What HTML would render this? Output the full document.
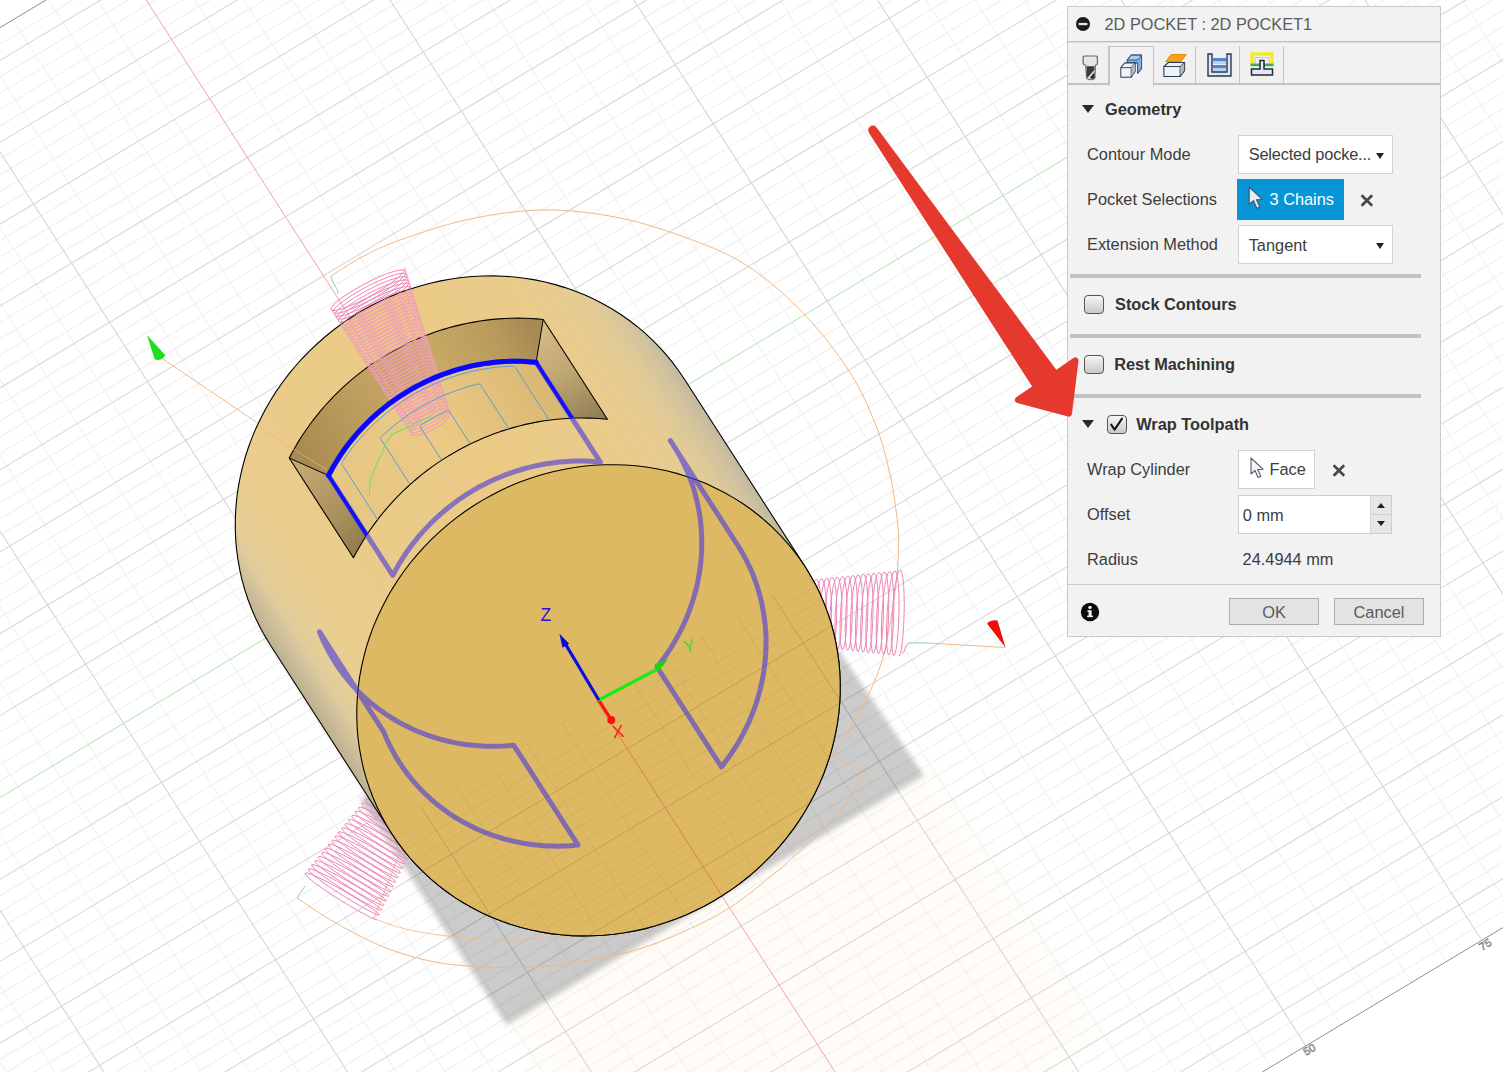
<!DOCTYPE html>
<html><head><meta charset="utf-8"><title>2D Pocket - Wrap Toolpath</title>
<style>
html,body{margin:0;padding:0;background:#fff;}
body{width:1503px;height:1072px;position:relative;overflow:hidden;}
#scene,#overlay{position:absolute;left:0;top:0;display:block}
#overlay{pointer-events:none}

#panel{position:absolute;left:0;top:0;width:0;height:0;font-family:"Liberation Sans",sans-serif;font-size:16.35px;color:#3c3c3c;}
#panel .abs{position:absolute;box-sizing:border-box}
#panel .box{position:absolute;left:1067px;top:6px;width:374px;height:631px;box-sizing:border-box;background:#f2f2f2;border:1px solid #c9c9c9}
#panel .t{position:absolute;white-space:nowrap;line-height:19px;color:#3c3c3c}
#panel .title{color:#5b5b5b}
#panel .hd{font-weight:bold;color:#333}
#panel .tab{border-right:1px solid #c6c6c6;background:#f0f0f0}
#panel .tabA{background:#f2f2f2;border:1px solid #c6c6c6;border-bottom:none}
#panel .tri{width:0;height:0;border-left:6.5px solid transparent;border-right:6.5px solid transparent;border-top:8.8px solid #2b2b2b}
#panel .dd{background:#fff;border:1px solid #d2d2d2}
#panel .caret{position:absolute;right:7.2px;top:16.6px;width:0;height:0;border-left:4.1px solid transparent;border-right:4.1px solid transparent;border-top:6px solid #222}
#panel .sel{background:#0696d7}
#panel .cb{width:19.5px;height:19px;border:1.5px solid #555;border-radius:4px;background:linear-gradient(#f6f6f6,#c9c9c9)}
#panel .spin{position:absolute;right:0;top:0;width:20px;height:100%;background:#e6e6e6;border-left:1px solid #d5d5d5}
#panel .spin:after{content:"";position:absolute;left:0;top:17.5px;width:20px;height:1px;background:#cfcfcf}
#panel .up{position:absolute;left:6px;top:7px;width:0;height:0;border-left:4px solid transparent;border-right:4px solid transparent;border-bottom:5px solid #222}
#panel .dn{position:absolute;left:6px;top:25px;width:0;height:0;border-left:4px solid transparent;border-right:4px solid transparent;border-top:5px solid #222}
#panel .btn{border:1px solid #adadad;background:#e3e3e3}

</style></head><body>
<svg id="scene" width="1503" height="1072" viewBox="0 0 1503 1072">
<defs>
<linearGradient id="gbody" gradientUnits="userSpaceOnUse" x1="270" y1="644.5" x2="684" y2="378.5"><stop offset="0" stop-color="#bdb08f"/><stop offset="0.03" stop-color="#cfc09b"/><stop offset="0.055" stop-color="#dfcb9c"/><stop offset="0.085" stop-color="#e7ce96"/><stop offset="0.14" stop-color="#eacd8e"/><stop offset="0.3" stop-color="#eacb88"/><stop offset="0.6" stop-color="#ebca86"/><stop offset="0.8" stop-color="#eacb8a"/><stop offset="0.9" stop-color="#e6cc92"/><stop offset="0.94" stop-color="#ddc998"/><stop offset="0.975" stop-color="#d0c29e"/><stop offset="1" stop-color="#c2b99e"/></linearGradient>
<linearGradient id="gback" gradientUnits="userSpaceOnUse" x1="308.9" y1="466.8" x2="539.6" y2="340.9"><stop offset="0" stop-color="#a98b52"/><stop offset="0.3" stop-color="#bf9f5f"/><stop offset="0.6" stop-color="#c9aa66"/><stop offset="0.85" stop-color="#b99b5c"/><stop offset="1" stop-color="#a68a54"/></linearGradient>
<linearGradient id="gleft" gradientUnits="userSpaceOnUse" x1="289.2" y1="458" x2="392.8" y2="575.4"><stop offset="0" stop-color="#c9ad74"/><stop offset="0.5" stop-color="#a88f5c"/><stop offset="1" stop-color="#776440"/></linearGradient>
<linearGradient id="gright" gradientUnits="userSpaceOnUse" x1="543.2" y1="319.5" x2="607.4" y2="419.3"><stop offset="0" stop-color="#d9bf85"/><stop offset="0.5" stop-color="#bda572"/><stop offset="1" stop-color="#8d7a52"/></linearGradient>
<linearGradient id="gfloor" gradientUnits="userSpaceOnUse" x1="328.5" y1="475.5" x2="536.1" y2="362.3"><stop offset="0" stop-color="#e6c684"/><stop offset="0.5" stop-color="#ecca86"/><stop offset="1" stop-color="#d8b873"/></linearGradient>
<radialGradient id="warm"><stop offset="0" stop-color="#fff3dc" stop-opacity="0.75"/><stop offset="0.6" stop-color="#fff6e6" stop-opacity="0.45"/><stop offset="1" stop-color="#fff8ee" stop-opacity="0"/></radialGradient>
<filter id="blur2" x="-20%" y="-20%" width="140%" height="140%"><feGaussianBlur stdDeviation="14"/></filter>
<filter id="blur" x="-10%" y="-10%" width="120%" height="120%"><feGaussianBlur stdDeviation="2.6"/></filter>
<clipPath id="capclip"><path d="M805.5,567.3L810.7,575.9 815.6,584.8 820,593.8 824,603.1 827.6,612.6 830.8,622.2 833.5,632 835.7,641.9 837.5,651.9 838.9,662 839.8,672.2 840.2,682.4 840.2,692.7 839.7,702.9 838.8,713.2 837.4,723.5 835.5,733.7 833.2,743.8 830.5,753.9 827.3,763.8 823.7,773.7 819.6,783.4 815.1,792.9 810.2,802.3 804.9,811.5 799.3,820.4 793.2,829.1 786.8,837.6 780,845.8 772.8,853.8 765.3,861.4 757.5,868.8 749.5,875.8 741.1,882.5 732.4,888.9 723.5,894.8 714.4,900.5 705,905.7 695.4,910.5 685.7,915 675.8,919 665.7,922.6 655.5,925.8 645.2,928.6 634.8,930.9 624.3,932.8 613.8,934.3 603.3,935.3 592.7,935.8 582.2,935.9 571.7,935.6 561.2,934.8 550.8,933.6 540.6,931.9 530.4,929.8 520.3,927.2 510.4,924.2 500.7,920.8 491.1,917 481.8,912.7 472.7,908.1 463.8,903 455.1,897.6 446.8,891.8 438.7,885.6 431,879.1 423.5,872.2 416.4,865 409.6,857.5 403.2,849.7 397.2,841.6 391.5,833.3 386.3,824.7 381.4,815.8 377,806.8 373,797.5 369.4,788 366.2,778.4 363.5,768.6 361.3,758.7 359.5,748.7 358.1,738.6 357.2,728.4 356.8,718.2 356.8,707.9 357.3,697.7 358.2,687.4 359.6,677.1 361.5,666.9 363.8,656.8 366.5,646.7 369.7,636.8 373.3,626.9 377.4,617.2 381.9,607.7 386.8,598.3 392.1,589.1 397.7,580.2 403.8,571.5 410.2,563 417,554.8 424.2,546.8 431.7,539.2 439.5,531.8 447.5,524.8 455.9,518.1 464.6,511.7 473.5,505.8 482.6,500.1 492,494.9 501.6,490.1 511.3,485.6 521.2,481.6 531.3,478 541.5,474.8 551.8,472 562.2,469.7 572.7,467.8 583.2,466.3 593.7,465.3 604.3,464.8 614.8,464.7 625.3,465 635.8,465.8 646.2,467 656.4,468.7 666.6,470.8 676.7,473.4 686.6,476.4 696.3,479.8 705.9,483.6 715.2,487.9 724.3,492.5 733.2,497.6 741.9,503 750.2,508.8 758.3,515 766,521.5 773.5,528.4 780.6,535.6 787.4,543.1 793.8,550.9 799.8,559 805.5,567.3Z"/></clipPath>
<clipPath id="bodyclip"><path d="M684,378.5L678.3,370.2 672.3,362.1 665.9,354.3 659.1,346.8 652,339.6 644.5,332.7 636.8,326.2 628.7,320 620.4,314.2 611.7,308.8 602.8,303.7 593.7,299.1 584.4,294.8 574.8,291 565.1,287.6 555.2,284.6 545.1,282 534.9,279.9 524.7,278.2 514.3,277 503.8,276.2 493.3,275.9 482.8,276 472.2,276.5 461.7,277.5 451.2,279 440.7,280.9 430.3,283.2 420,286 409.8,289.2 399.7,292.8 389.8,296.8 380.1,301.3 370.5,306.1 361.1,311.3 352,317 343.1,322.9 334.4,329.3 326,336 318,343 310.2,350.4 302.7,358 295.5,366 288.7,374.2 282.3,382.7 276.2,391.4 270.6,400.3 265.3,409.5 260.4,418.9 255.9,428.4 251.8,438.1 248.2,448 245,457.9 242.3,468 240,478.1 238.1,488.3 236.7,498.6 235.8,508.9 235.3,519.1 235.3,529.4 235.7,539.6 236.6,549.8 238,559.9 239.8,569.9 242,579.8 244.7,589.6 247.9,599.2 251.5,608.7 255.5,618 259.9,627 264.8,635.9 270,644.5 391.5,833.3 397.2,841.6 403.2,849.7 409.6,857.5 416.4,865 423.5,872.2 431,879.1 438.7,885.6 446.8,891.8 455.1,897.6 463.8,903 472.7,908.1 481.8,912.7 491.1,917 500.7,920.8 510.4,924.2 520.3,927.2 530.4,929.8 540.6,931.9 550.8,933.6 561.2,934.8 571.7,935.6 582.2,935.9 592.7,935.8 603.3,935.3 613.8,934.3 624.3,932.8 634.8,930.9 645.2,928.6 655.5,925.8 665.7,922.6 675.8,919 685.7,915 695.4,910.5 705,905.7 714.4,900.5 723.5,894.8 732.4,888.9 741.1,882.5 749.5,875.8 757.5,868.8 765.3,861.4 772.8,853.8 780,845.8 786.8,837.6 793.2,829.1 799.3,820.4 804.9,811.5 810.2,802.3 815.1,792.9 819.6,783.4 823.7,773.7 827.3,763.8 830.5,753.9 833.2,743.8 835.5,733.7 837.4,723.5 838.8,713.2 839.7,702.9 840.2,692.7 840.2,682.4 839.8,672.2 838.9,662 837.5,651.9 835.7,641.9 833.5,632 830.8,622.2 827.6,612.6 824,603.1 820,593.8 815.6,584.8 810.7,575.9 805.5,567.3Z"/></clipPath>
</defs>
<rect width="1503" height="1072" fill="#fff"/>
<path d="M500,1010L930,760L1110,1040L680,1290Z" fill="#ffeccc" fill-opacity="0.14" filter="url(#blur2)"/>
<clipPath id="gclip"><path d="M0,27.6 L1503,-874.2 L1503,927.6 L0,1829.4 Z"/></clipPath>
<g clip-path="url(#gclip)" fill="none" stroke-width="1">
<path id="gsmin" d="M-682.5,0L6.4,1072M-633.8,0L55.1,1072M-536.2,0L152.6,1072M-487.5,0L201.4,1072M-438.8,0L250.1,1072M-390,0L298.9,1072M-292.5,0L396.4,1072M-243.8,0L445.1,1072M-195,0L493.9,1072M-146.2,0L542.6,1072M-48.8,0L640.1,1072M0,0L688.9,1072M48.8,0L737.6,1072M97.5,0L786.4,1072M195,0L883.9,1072M243.8,0L932.6,1072M292.5,0L981.4,1072M341.2,0L1030.1,1072M438.8,0L1127.6,1072M487.5,0L1176.4,1072M536.2,0L1225.1,1072M585,0L1273.9,1072M682.5,0L1371.4,1072M731.2,0L1420.1,1072M780,0L1468.9,1072M828.8,0L1517.6,1072M926.2,0L1615.1,1072M975,0L1663.9,1072M1023.8,0L1712.6,1072M1072.5,0L1761.4,1072M1170,0L1858.9,1072M1218.8,0L1907.6,1072M1267.5,0L1956.4,1072M1316.2,0L2005.1,1072M1413.8,0L2102.6,1072M1462.5,0L2151.4,1072" stroke="#f4f4f4" stroke-width="1.4"/>
<path id="ghmin" d="M0,44L1503,-857.8M0,76.8L1503,-825M0,93.2L1503,-808.6M0,109.5L1503,-792.3M0,125.9L1503,-775.9M0,158.7L1503,-743.1M0,175.1L1503,-726.7M0,191.4L1503,-710.4M0,207.8L1503,-694M0,240.6L1503,-661.2M0,257L1503,-644.8M0,273.3L1503,-628.5M0,289.7L1503,-612.1M0,322.5L1503,-579.3M0,338.9L1503,-562.9M0,355.2L1503,-546.6M0,371.6L1503,-530.2M0,404.4L1503,-497.4M0,420.8L1503,-481M0,437.1L1503,-464.7M0,453.5L1503,-448.3M0,486.3L1503,-415.5M0,502.7L1503,-399.1M0,519L1503,-382.8M0,535.4L1503,-366.4M0,568.2L1503,-333.6M0,584.6L1503,-317.2M0,600.9L1503,-300.9M0,617.3L1503,-284.5M0,650.1L1503,-251.7M0,666.5L1503,-235.3M0,682.8L1503,-219M0,699.2L1503,-202.6M0,732L1503,-169.8M0,748.4L1503,-153.4M0,764.7L1503,-137.1M0,781.1L1503,-120.7M0,813.9L1503,-87.9M0,830.3L1503,-71.5M0,846.6L1503,-55.2M0,863L1503,-38.8M0,895.8L1503,-6M0,912.2L1503,10.4M0,928.5L1503,26.7M0,944.9L1503,43.1M0,977.7L1503,75.9M0,994.1L1503,92.3M0,1010.4L1503,108.6M0,1026.8L1503,125M0,1059.6L1503,157.8M0,1076L1503,174.2M0,1092.3L1503,190.5M0,1108.7L1503,206.9M0,1141.5L1503,239.7M0,1157.9L1503,256.1M0,1174.2L1503,272.4M0,1190.6L1503,288.8M0,1223.4L1503,321.6M0,1239.8L1503,338M0,1256.1L1503,354.3M0,1272.5L1503,370.7M0,1305.3L1503,403.5M0,1321.7L1503,419.9M0,1338L1503,436.2M0,1354.4L1503,452.6M0,1387.2L1503,485.4M0,1403.6L1503,501.8M0,1419.9L1503,518.1M0,1436.3L1503,534.5M0,1469.1L1503,567.3M0,1485.5L1503,583.7M0,1501.8L1503,600M0,1518.2L1503,616.4M0,1551L1503,649.2M0,1567.4L1503,665.6M0,1583.7L1503,681.9M0,1600.1L1503,698.3M0,1632.9L1503,731.1M0,1649.3L1503,747.5M0,1665.6L1503,763.8M0,1682L1503,780.2M0,1714.8L1503,813M0,1731.2L1503,829.4M0,1747.5L1503,845.7M0,1763.9L1503,862.1M0,1796.7L1503,894.9M0,1813.1L1503,911.3" stroke="#f2f2f2" stroke-width="1.4"/>
<path id="gsmaj" d="M-585,0L103.9,1072M-341.2,0L347.6,1072M-97.5,0L591.4,1072M390,0L1078.9,1072M633.8,0L1322.6,1072M877.5,0L1566.4,1072M1121.2,0L1810.1,1072M1365,0L2053.9,1072" stroke="#d6d6d6" stroke-width="1.1"/>
<path id="ghmaj" d="M0,60.4L1503,-841.4M0,142.3L1503,-759.5M0,224.2L1503,-677.6M0,306.1L1503,-595.7M0,388L1503,-513.8M0,469.9L1503,-431.9M0,551.8L1503,-350M0,633.7L1503,-268.1M0,715.6L1503,-186.2M0,879.4L1503,-22.4M0,961.3L1503,59.5M0,1043.2L1503,141.4M0,1125.1L1503,223.3M0,1207L1503,305.2M0,1288.9L1503,387.1M0,1370.8L1503,469M0,1452.7L1503,550.9M0,1534.6L1503,632.8M0,1616.5L1503,714.7M0,1698.4L1503,796.6M0,1780.3L1503,878.5" stroke="#d8d8d8" stroke-width="1.1"/>
<path d="M146.25,0L835.1,1072" stroke="#f0a3a3"/>
<path d="M0,797.5L1503,-104.3" stroke="#a9e6a9"/>
</g>
<path d="M0,1829.4L1503,927.6" stroke="#8f8f8f" stroke-width="1" fill="none"/>
<path d="M0,27.6L1503,-874.2" stroke="#8f8f8f" stroke-width="1" fill="none"/>
<path d="M360,799L779.4,563.3 924,775.5 506.5,1025Z" fill="#000" fill-opacity="0.205" filter="url(#blur)"/>
<g font-family="Liberation Sans,sans-serif" font-size="11" fill="none" stroke="#8a8a8a" stroke-width="0.7"><text transform="translate(1306,1056) rotate(-31)">50</text><text transform="translate(1482,951) rotate(-31)">75</text></g>
<g fill="none" stroke-width="1">
<path d="M330.6,276.2L333,274.7 336.1,272.7 339.8,270.3 343.9,267.7 348.4,264.9 353,262.1 357.5,259.4 362,257 366.2,254.8 370.3,252.7 374.4,250.6 378.6,248.6 383.1,246.6 388.1,244.5 393.7,242.3 400,240 407.2,237.5 415.1,234.8 423.7,231.9 432.7,229 442,226.2 451.4,223.5 460.8,221.1 470,219 479.1,217.2 488.4,215.5 497.8,214 507.2,212.7 516.7,211.6 526.1,210.8 535.6,210.2 545,210 554.4,210.1 563.8,210.5 573.2,211.1 582.7,212.1 592.1,213.2 601.4,214.6 610.7,216.2 620,218 629.3,220 638.7,222.4 648,225 657.3,227.8 666.5,230.7 675.5,233.8 684.2,236.9 692.5,240 700.4,243 708,246 715.3,249 722.3,252.2 729.3,255.5 736.2,259.1 743,263.1 750,267.5 757.1,272.4 764.2,277.7 771.2,283.4 778.3,289.4 785.2,295.6 792,302 798.6,308.4 805,315 811.2,321.7 817.4,328.8 823.5,336 829.3,343.4 835,350.9 840.3,358.2 845.4,365.5 850,372.5 854.2,379.4 858.1,386.2 861.6,392.9 864.9,399.5 867.9,406.1 870.6,412.5 873.3,418.8 875.8,425 878,431 880.1,436.9 881.9,442.6 883.5,448.3 885,453.8 886.4,459.3 887.7,464.7 889,470 890.2,475.3 891.3,480.6 892.3,485.8 893.2,490.9 894,496 894.7,500.8 895.4,505.5 896,510 896.6,514.2 897.1,518.2 897.5,522 897.9,525.6 898.2,529.2 898.4,532.7 898.6,536.3 898.7,540 898.7,544 898.6,548.2 898.5,552.6 898.3,556.9 898,560.9 897.8,564.6 897.6,567.7 897.5,570" stroke="#f3b885"/>
<path d="M897.5,570L897.3,572.3 896.9,575.5 896.6,579.3 896.1,583.5 895.6,588 895,592.5 894.4,597.1 893.7,601.9 892.9,607 892.1,612.3 891.1,617.9 890,623.8 888.8,630 887.5,636.7 886.1,643.6 884.6,650.6 882.9,657.4 881,664 878.8,670.3 876.4,676.6 873.9,682.8 871.2,688.8 868.6,694.5 866,700 863.5,705.1 861.1,710 858.7,714.6 856.3,719 853.7,723.5 851,728 847.9,732.9 844.4,738.1 840.8,743.2 837.4,748 834.6,752.1 832.5,755" stroke="#f3b885"/>
<path d="M832.5,755L866.2,772.5 866.2,772.5 865.2,774.3 863.7,776.6 862,779.4 860,782.6 858,785.8 855.9,789.1 853.9,792.2 852,795 850.3,797.5 848.7,799.8 847.2,802 845.6,804.2 843.9,806.4 842,808.7 839.9,811.2 837.5,814 834.8,817 831.8,820.2 828.6,823.6 825.2,827.1 821.6,830.7 817.9,834.4 814,838.2 810,842 805.8,845.9 801.4,849.9 796.9,854 792.2,858.2 787.4,862.4 782.5,866.7 777.5,870.9 772.5,875 767.4,879.1 762.3,883.4 757,887.6 751.7,891.8 746.3,896 740.9,900 735.5,903.9 730,907.5 724.5,910.9 719,914.1 713.5,917.2 707.9,920.1 702.3,922.9 696.6,925.7 690.8,928.3 685,931 679.1,933.6 673.1,936.3 667,938.8 660.9,941.3 654.7,943.7 648.5,945.9 642.2,948 636,950 629.7,951.8 623.4,953.4 617,954.9 610.6,956.3 604.1,957.6 597.7,958.8 591.3,959.9 585,961 578.7,962 572.4,963 566.2,963.9 559.9,964.7 553.7,965.4 547.5,966 541.2,966.6 535,967 528.8,967.3 522.5,967.5 516.2,967.7 510,967.7 503.8,967.6 497.5,967.5 491.2,967.3 485,967 478.8,966.7 472.5,966.3 466.2,965.9 460,965.4 453.8,964.8 447.5,964 441.2,963.1 435,962 428.8,960.7 422.5,959.3 416.2,957.7 410,956 403.8,954.1 397.5,952.1 391.2,949.9 385,947.5 378.7,944.9 372.2,942 365.7,938.9 359.2,935.6 352.9,932.3 346.7,929 340.7,925.7 335,922.5 329.4,919.2 323.8,915.8 318.2,912.2 312.9,908.7 307.9,905.4 303.5,902.4 299.8,899.9 297,898" stroke="#f3b885"/>
<path d="M400,852L373.8,918.8 373.8,918.8 376.5,919.6 379.9,920.9 384.1,922.3 388.8,923.9 393.8,925.6 399.1,927.2 404.6,928.7 410,930 415.6,931.2 421.5,932.3 427.7,933.3 434.1,934.3 440.6,935.2 447.2,936.1 453.7,936.8 460,937.5 466.4,938.1 473,938.6 479.7,939 486.4,939.3 492.9,939.6 499.1,939.8 504.8,939.9 510,940 514.3,940.1 517.6,940.1 520.4,940 523,939.9 525.6,939.8 528.7,939.5 532.5,939 537.5,938.5 543.4,938 549.8,937.6 556.7,937.2 564.2,936.7 572.3,935.8 580.9,934.5 590.2,932.6 600,930 610.8,926.7 622.8,922.9 635.6,918.6 648.9,913.8 662.3,908.6 675.5,902.8 688.2,896.7 700,890 711.1,882.7 722.1,874.5 732.7,865.7 743,856.6 752.9,847.2 762.4,837.9 771.5,828.7 780,820 788.2,811.2 796.3,801.9 804,792.4 811.2,783.1 817.9,774.4 823.7,766.6 828.6,760 832.5,755" stroke="#f3b885" opacity="0.8"/>
<path d="M160,357L327,470" stroke="#f3b885"/>
<path d="M902,654 C905,652 905,645 908.75,642.8" stroke="#ee86b6"/><path d="M908.75,642.8L927.5,643" stroke="#7fd9a0"/><path d="M927.5,643L1005.4,647.5" stroke="#f3b885"/>
<path d="M898.5,655.6L899.4,656 900.4,653.8 901.4,649.3 902.3,642.6 903.1,634.3 903.7,624.7 904.1,614.4 904.3,604.1 904.1,594.3 903.7,585.6 903,578.5 902,573.4 900.9,570.6 899.6,570.3 898.2,572.5 896.8,577 895.5,583.6 894.3,591.9 893.3,601.4 892.5,611.6 892,621.8 891.7,631.6 891.7,640.2 892.1,647.3 892.6,652.3 893.4,655.1 894.3,655.4 895.2,653.3 896.2,648.8 897.1,642.2 897.9,634 898.5,624.5 898.9,614.4 899.1,604.2 898.9,594.6 898.5,586 897.7,579 896.8,574 895.6,571.2 894.4,570.9 893,573 891.6,577.5 890.3,584 889.1,592.2 888.1,601.5 887.3,611.6 886.8,621.7 886.5,631.3 886.6,639.8 886.9,646.8 887.5,651.8 888.2,654.5 889.1,654.8 890.1,652.7 891,648.3 892,641.8 892.8,633.7 893.4,624.4 893.7,614.4 893.9,604.4 893.7,594.8 893.2,586.4 892.5,579.5 891.6,574.5 890.4,571.8 889.1,571.5 887.8,573.6 886.4,577.9 885.1,584.4 883.9,592.4 882.9,601.7 882.1,611.6 881.6,621.6 881.4,631 881.4,639.4 881.8,646.3 882.3,651.2 883.1,653.9 884,654.3 884.9,652.2 885.9,647.8 886.8,641.5 887.6,633.4 888.2,624.3 888.6,614.4 888.7,604.5 888.5,595.1 888,586.7 887.3,579.9 886.3,575 885.2,572.4 883.9,572 882.5,574.1 881.2,578.4 879.9,584.7 878.7,592.7 877.7,601.8 876.9,611.6 876.4,621.4 876.2,630.8 876.3,639.1 876.6,645.8 877.2,650.7 877.9,653.4 878.8,653.7 879.8,651.6 880.7,647.4 881.6,641.1 882.4,633.2 883,624.1 883.4,614.4 883.5,604.6 883.3,595.4 882.8,587.1 882.1,580.4 881.1,575.6 880,572.9 878.7,572.6 877.3,574.6 875.9,578.9 874.6,585.1 873.5,593 872.5,602 871.7,611.6 871.2,621.3 871,630.5 871.1,638.7 871.4,645.4 872,650.2 872.8,652.8 873.7,653.1 874.6,651.1 875.6,646.9 876.5,640.7 877.2,632.9 877.8,624 878.2,614.4 878.3,604.8 878.1,595.6 877.6,587.5 876.9,580.9 875.9,576.1 874.7,573.5 873.4,573.2 872.1,575.2 870.7,579.4 869.4,585.5 868.3,593.2 867.3,602.1 866.5,611.6 866.1,621.1 865.9,630.2 865.9,638.3 866.3,644.9 866.9,649.6 867.6,652.2 868.5,652.5 869.5,650.6 870.4,646.4 871.3,640.3 872.1,632.7 872.6,623.8 873,614.4 873.1,604.9 872.9,595.9 872.4,587.9 871.6,581.3 870.7,576.6 869.5,574.1 868.2,573.7 866.9,575.7 865.5,579.8 864.2,585.9 863.1,593.5 862.1,602.2 861.4,611.6 860.9,621 860.7,630 860.8,637.9 861.1,644.4 861.7,649.1 862.5,651.7 863.4,652 864.3,650 865.3,645.9 866.2,639.9 866.9,632.4 867.5,623.7 867.8,614.4 867.9,605.1 867.6,596.2 867.2,588.3 866.4,581.8 865.4,577.2 864.3,574.6 863,574.3 861.6,576.2 860.3,580.3 859,586.2 857.9,593.7 856.9,602.3 856.2,611.6 855.7,620.9 855.5,629.7 855.6,637.5 856,643.9 856.6,648.5 857.3,651.1 858.2,651.4 859.2,649.5 860.1,645.5 861,639.6 861.7,632.1 862.3,623.6 862.6,614.4 862.7,605.2 862.4,596.5 861.9,588.7 861.2,582.3 860.2,577.7 859,575.2 857.7,574.9 856.4,576.8 855.1,580.8 853.8,586.6 852.6,594 851.7,602.5 851,611.6 850.5,620.7 850.4,629.4 850.5,637.1 850.8,643.5 851.4,648 852.2,650.5 853.1,650.8 854,649 855,645 855.8,639.2 856.6,631.9 857.1,623.5 857.4,614.4 857.5,605.4 857.2,596.7 856.7,589.1 856,582.8 855,578.3 853.8,575.8 852.5,575.4 851.2,577.3 849.8,581.2 848.6,587 847.4,594.3 846.5,602.6 845.8,611.5 845.4,620.6 845.2,629.1 845.3,636.8 845.7,643 846.3,647.5 847,649.9 847.9,650.3 848.9,648.4 849.8,644.5 850.7,638.8 851.4,631.6 851.9,623.3 852.2,614.5 852.3,605.5 852,597 851.5,589.4 850.7,583.3 849.7,578.8 848.6,576.3 847.3,576 845.9,577.8 844.6,581.7 843.4,587.4 842.2,594.5 841.3,602.7 840.6,611.5 840.2,620.4 840,628.9 840.1,636.4 840.5,642.5 841.1,646.9 841.9,649.4 842.8,649.7 843.7,647.9 844.7,644.1 845.5,638.5 846.2,631.4 846.7,623.2 847,614.5 847.1,605.7 846.8,597.3 846.3,589.8 845.5,583.7 844.5,579.3 843.3,576.9 842.1,576.6 840.7,578.4 839.4,582.1 838.1,587.7 837,594.8 836.1,602.8 835.4,611.5 835,620.3 834.9,628.6 835,636 835.4,642 836,646.4 836.7,648.8 837.6,649.1 838.6,647.4 839.5,643.6 840.3,638.1 841.1,631.1 841.6,623.1 841.8,614.5 841.9,605.8 841.6,597.6 841.1,590.2 840.3,584.2 839.3,579.9 838.1,577.5 836.8,577.1 835.5,578.9 834.2,582.6 832.9,588.1 831.8,595 830.9,603 830.2,611.5 829.8,620.1 829.7,628.3 829.8,635.6 830.2,641.5 830.8,645.8 831.6,648.2 832.5,648.6 833.4,646.8 834.3,643.2 835.2,637.7 835.9,630.9 836.4,623 836.7,614.5 836.7,606 836.4,597.9 835.9,590.6 835.1,584.7 834.1,580.4 832.9,578.1 831.6,577.7 830.3,579.4 828.9,583.1 827.7,588.5 826.6,595.3 825.7,603.1 825.1,611.5 824.7,619.9 824.5,628 824.7,635.2 825.1,641.1 825.7,645.3 826.4,647.7 827.3,648 828.3,646.3 829.2,642.7 830,637.4 830.7,630.6 831.2,622.9 831.5,614.5 831.5,606.1 831.2,598.1 830.6,591 829.8,585.2 828.8,581 827.7,578.6 826.4,578.3 825,579.9 823.7,583.5 822.5,588.8 821.4,595.5 820.5,603.2 819.9,611.5 819.5,619.8 819.4,627.7 819.5,634.8 819.9,640.6 820.5,644.8 821.3,647.1 822.2,647.4 823.1,645.8 824,642.2 824.9,637 825.5,630.4 826,622.7 826.3,614.6 826.3,606.3 826,598.4 825.4,591.4 824.6,585.7 823.6,581.5 822.4,579.2 821.1,578.8 819.8,580.5 818.5,584 817.3,589.2 816.2,595.8 815.3,603.3 814.7,611.4 814.3,619.6 814.2,627.4 814.4,634.4 814.8,640.1 815.4,644.2 816.2,646.5 817,646.9 818,645.3 818.9,641.8 819.7,636.6 820.4,630.1 820.8,622.6 821.1,614.6 821.1,606.5 820.8,598.7 820.2,591.8 819.4,586.2 818.4,582.1 817.2,579.8 815.9,579.4 814.6,581 813.3,584.4 812.1,589.5 811,596 810.1,603.4 809.5,611.4 809.1,619.5 809,627.1 809.2,634 809.6,639.6 810.2,643.7 811,646 811.9,646.3 812.8,644.7 813.7,641.3 814.5,636.3 815.2,629.9 815.7,622.5 815.9,614.6 815.9,606.6 815.5,599 815,592.2 814.2,586.6 813.1,582.6 812,580.3 810.7,580 809.4,581.5 808.1,584.9 806.8,589.9 805.8,596.2 804.9,603.5 804.3,611.4 803.9,619.3 803.9,626.9 804,633.6 804.5,639.1 805.1,643.1 805.9,645.4 806.7,645.8 807.7,644.2 808.6,640.9 809.4,635.9 810,629.6 810.5,622.4 810.7,614.6 810.7,606.8 810.3,599.3 809.8,592.6 808.9,587.1 807.9,583.1 806.7,580.9 805.4,580.5 804.1,582 802.8,585.3 801.6,590.3 800.6,596.5 799.7,603.6 799.1,611.3 798.8,619.1 798.7,626.6 798.9,633.2 799.3,638.6 799.9,642.6 800.7,644.8 801.6,645.2 802.5,643.7 803.4,640.4 804.2,635.6 804.8,629.4 805.3,622.3 805.5,614.7 805.4,606.9 805.1,599.6 804.5,593 803.7,587.6 802.7,583.7 801.5,581.5 800.2,581.1 798.9,582.6 797.6,585.8 796.4,590.6 795.4,596.7 794.5,603.8 793.9,611.3 793.6,619 793.5,626.3 793.7,632.8 794.1,638.1 794.8,642 795.6,644.2 796.4,644.6 797.4,643.2 798.3,640 799,635.2 799.7,629.2 800.1,622.2 800.3,614.7 800.2,607.1 799.9,599.9 799.3,593.4 798.5,588.1 797.5,584.2 796.3,582 795,581.7 793.7,583.1 792.4,586.3 791.2,591 790.2,596.9 789.3,603.9 788.8,611.3 788.4,618.8 788.4,626 788.6,632.4 789,637.7 789.6,641.5 790.4,643.7 791.3,644.1 792.2,642.7 793.1,639.5 793.9,634.9 794.5,628.9 794.9,622.1 795.1,614.7 795,607.3 794.7,600.2 794.1,593.8 793.3,588.6 792.2,584.8 791,582.6 789.8,582.2 788.4,583.6 787.2,586.7 786,591.3 785,597.2 784.2,604 783.6,611.2 783.2,618.6 783.2,625.7 783.4,632 783.8,637.2 784.5,640.9 785.3,643.1 786.2,643.5 787.1,642.1 787.9,639.1 788.7,634.5 789.3,628.7 789.7,622 789.9,614.8 789.8,607.5 789.5,600.5 788.9,594.2 788,589.1 787,585.3 785.8,583.2 784.5,582.8 783.2,584.1 782,587.1 780.8,591.7 779.8,597.4 779,604.1 778.4,611.2 778.1,618.5 778,625.4 778.2,631.6 778.7,636.7 779.3,640.4 780.1,642.5 781,642.9 781.9,641.6 782.8,638.6 783.5,634.2 784.2,628.5 784.6,621.9 784.7,614.8 784.6,607.6 784.3,600.8 783.7,594.6 782.8,589.6 781.8,585.9 780.6,583.8 779.3,583.3 778,584.6 776.7,587.6 775.6,592 774.6,597.6 773.8,604.2 773.2,611.2 772.9,618.3 772.9,625.1 773.1,631.2 773.5,636.2 774.2,639.8 775,642 775.9,642.4 776.8,641.1 777.6,638.2 778.4,633.8 779,628.2 779.4,621.8 779.5,614.9 779.4,607.8 779.1,601.1 778.4,595 777.6,590.1 776.5,586.4 775.3,584.3 774.1,583.9 772.8,585.2 771.5,588 770.4,592.4 769.4,597.9 768.6,604.2 768,611.1 767.7,618.1 767.7,624.8 767.9,630.7 768.4,635.7 769,639.3 769.8,641.4 770.7,641.8 771.6,640.6 772.5,637.7 773.2,633.5 773.8,628 774.2,621.7 774.3,614.9 774.2,608 773.9,601.4 773.2,595.5 772.4,590.6 771.3,587 770.1,584.9 768.8,584.5 767.5,585.7 766.3,588.5 765.1,592.7 764.2,598.1 763.4,604.3 762.8,611.1 762.5,617.9 762.5,624.5 762.8,630.3 763.2,635.2 763.9,638.8 764.7,640.8 765.6,641.3 766.5,640.1 767.3,637.3 768.1,633.1 768.6,627.8 769,621.6 769.2,614.9 769,608.2 768.6,601.7 768,595.9 767.1,591.1 766.1,587.5 764.9,585.5 763.6,585 762.3,586.2 761.1,588.9 759.9,593 758.9,598.3 758.2,604.4 757.6,611 757.4,617.7 757.4,624.2 757.6,629.9 758.1,634.7 758.7,638.2 759.5,640.2 760.4,640.7 761.3,639.5 762.2,636.9 762.9,632.8 763.5,627.6 763.8,621.5 764,615 763.8,608.4 763.4,602 762.8,596.3 761.9,591.6 760.9,588.1 759.7,586 758.4,585.6 757.1,586.7 755.8,589.4 754.7,593.4 753.7,598.5 753,604.5 752.5,611 752.2,617.6 752.2,623.9 752.5,629.5 752.9,634.2 753.6,637.7 754.4,639.7 755.3,640.1 756.2,639 757,636.4 757.7,632.4 758.3,627.4 758.7,621.4 758.8,615 758.6,608.5 758.2,602.3 757.6,596.7 756.7,592 755.6,588.6 754.4,586.6 753.2,586.1 751.9,587.2 750.6,589.8 749.5,593.7 748.5,598.8 747.8,604.6 747.3,610.9 747,617.4 747,623.5 747.3,629.1 747.8,633.7 748.4,637.1 749.2,639.1 750.1,639.6 751,638.5 751.8,636 752.6,632.1 753.1,627.1 753.5,621.4 753.6,615.1 753.4,608.7 753,602.6 752.3,597.1 751.5,592.5 750.4,589.2 749.2,587.2 747.9,586.7 746.6,587.7 745.4,590.2 744.3,594.1 743.3,599 742.6,604.7 742.1,610.9 741.8,617.2 741.9,623.2 742.1,628.7 742.6,633.2 743.3,636.6 744.1,638.5 745,639 745.9,638 746.7,635.5 747.4,631.8 747.9,626.9 748.3,621.3 748.4,615.1 748.2,608.9 747.8,602.9 747.1,597.5 746.2,593 745.2,589.7 744,587.8 742.7,587.3 741.4,588.3 740.2,590.7 739.1,594.4 738.1,599.2 737.4,604.8 736.9,610.8 736.7,617 736.7,622.9 737,628.3 737.5,632.7 738.1,636 738.9,638 739.8,638.5 740.7,637.5 741.5,635.1 742.2,631.4 742.8,626.7 743.1,621.2 743.2,615.2 743,609.1 742.6,603.2 741.9,598 741,593.5 739.9,590.3 738.7,588.3 737.5,587.8 736.2,588.8 735,591.1 733.9,594.7 732.9,599.4 732.2,604.9 731.7,610.8 731.5,616.8 731.5,622.6 731.8,627.8 732.3,632.2 733,635.4 733.8,637.4 734.7,637.9 735.5,637 736.4,634.7 737.1,631.1 737.6,626.5 737.9,621.1 738,615.3 737.8,609.3 737.4,603.6 736.7,598.4 735.8,594 734.7,590.8 733.5,588.9 732.2,588.4 731,589.3 729.7,591.6 728.7,595.1 727.7,599.6 727,604.9 726.5,610.7 726.3,616.6 726.4,622.3 726.7,627.4 727.2,631.7 727.9,634.9 728.7,636.8 729.5,637.4 730.4,636.5 731.2,634.2 731.9,630.8 732.4,626.3 732.7,621 732.8,615.3 732.6,609.5 732.2,603.9 731.5,598.8 730.6,594.5 729.5,591.4 728.3,589.5 727,588.9 725.7,589.8 724.5,592 723.4,595.4 722.5,599.8 721.8,605 721.4,610.6 721.2,616.4 721.2,622 721.5,627 722,631.2 722.7,634.3 723.5,636.2 724.4,636.8 725.2,636 726.1,633.8 726.7,630.4 727.3,626.1 727.6,621 727.6,615.4 727.4,609.7 727,604.2 726.2,599.2 725.3,595 724.2,591.9 723,590 721.8,589.5 720.5,590.3 719.3,592.4 718.2,595.7 717.3,600 716.6,605.1 716.2,610.6 716,616.2 716,621.7 716.3,626.6 716.9,630.7 717.6,633.8 718.4,635.7 719.2,636.2 720.1,635.5 720.9,633.4 721.6,630.1 722.1,625.9 722.4,620.9 722.4,615.4 722.2,609.9 721.7,604.5 721,599.6 720.1,595.6 719,592.5" stroke="#ee86b6" stroke-width="1"/>
<path d="M376.6,918.9L376.6,919.6 374.6,919.1 370.5,917.3 364.7,914.4 357.5,910.4 349.3,905.6 340.6,900.3 331.9,894.8 323.8,889.3 316.7,884.3 311,879.9 307,876.4 305.1,874.1 305.3,873 307.5,873.1 311.8,874.6 317.8,877.2 325.2,880.8 333.5,885.2 342.4,890.1 351.2,895.3 359.5,900.4 366.8,905.1 372.7,909.1 376.8,912.2 378.9,914.2 379,915 376.9,914.5 372.9,912.7 367.2,909.8 360.1,905.9 352,901.2 343.4,895.9 334.9,890.5 326.9,885.1 319.8,880.1 314.2,875.7 310.3,872.3 308.4,870 308.6,868.9 310.8,869 315.1,870.4 321,873 328.3,876.5 336.5,880.9 345.2,885.8 353.9,890.8 362.1,895.9 369.3,900.5 375.1,904.5 379.2,907.5 381.3,909.5 381.3,910.3 379.3,909.8 375.4,908.1 369.7,905.2 362.7,901.4 354.7,896.7 346.3,891.5 337.8,886.1 329.9,880.8 323,875.9 317.5,871.6 313.6,868.2 311.8,865.9 311.9,864.8 314.2,864.9 318.3,866.3 324.2,868.8 331.3,872.3 339.5,876.6 348.1,881.4 356.7,886.4 364.7,891.3 371.8,895.9 377.6,899.9 381.6,902.9 383.7,904.9 383.7,905.7 381.7,905.2 377.8,903.5 372.2,900.7 365.3,896.8 357.4,892.3 349.1,887.1 340.8,881.8 333,876.6 326.2,871.7 320.7,867.4 316.9,864.1 315.1,861.8 315.3,860.6 317.5,860.8 321.6,862.1 327.3,864.6 334.4,868 342.4,872.3 350.9,877 359.4,881.9 367.4,886.8 374.4,891.4 380,895.2 384,898.2 386,900.2 386.1,901 384.1,900.5 380.2,898.9 374.7,896.1 367.9,892.3 360.2,887.8 352,882.8 343.8,877.5 336.1,872.3 329.4,867.5 324,863.3 320.3,859.9 318.4,857.7 318.6,856.5 320.8,856.6 324.8,858 330.5,860.4 337.5,863.8 345.4,867.9 353.8,872.6 362.1,877.5 370,882.3 376.9,886.8 382.4,890.6 386.3,893.6 388.4,895.5 388.4,896.3 386.5,895.9 382.7,894.3 377.3,891.5 370.5,887.8 362.9,883.3 354.8,878.4 346.7,873.2 339.2,868.1 332.5,863.3 327.2,859.1 323.6,855.8 321.8,853.6 322,852.4 324.1,852.5 328.1,853.8 333.7,856.2 340.6,859.5 348.4,863.6 356.6,868.2 364.9,873 372.6,877.8 379.4,882.2 384.9,886 388.7,889 390.7,890.9 390.8,891.7 388.9,891.2 385.1,889.6 379.8,886.9 373.2,883.3 365.6,878.9 357.7,874 349.7,868.9 342.2,863.8 335.7,859.1 330.5,855 326.9,851.7 325.1,849.4 325.3,848.3 327.4,848.4 331.3,849.6 336.9,852 343.7,855.3 351.3,859.3 359.5,863.8 367.6,868.6 375.2,873.3 381.9,877.6 387.3,881.4 391.1,884.3 393.1,886.2 393.1,887 391.3,886.6 387.6,885 382.3,882.4 375.8,878.8 368.4,874.4 360.5,869.6 352.7,864.6 345.3,859.6 338.9,854.9 333.7,850.8 330.2,847.6 328.5,845.3 328.6,844.2 330.7,844.3 334.6,845.5 340,847.8 346.7,851 354.3,855 362.3,859.4 370.3,864.1 377.8,868.8 384.4,873.1 389.8,876.8 393.5,879.7 395.4,881.5 395.5,882.3 393.6,881.9 390,880.4 384.8,877.8 378.4,874.3 371.1,870 363.4,865.2 355.7,860.2 348.4,855.3 342.1,850.7 337,846.7 333.5,843.5 331.8,841.2 332,840.1 334,840.2 337.8,841.3 343.2,843.6 349.8,846.8 357.3,850.7 365.2,855.1 373,859.7 380.4,864.2 386.9,868.5 392.2,872.1 395.9,875 397.8,876.9 397.8,877.7 396,877.3 392.5,875.8 387.4,873.2 381,869.8 373.8,865.5 366.2,860.9 358.6,855.9 351.5,851.1 345.3,846.5 340.3,842.5 336.8,839.3 335.1,837.1 335.3,836 337.3,836 341.1,837.2 346.4,839.4 352.9,842.5 360.2,846.3 368,850.7 375.7,855.2 383,859.7 389.5,863.9 394.6,867.5 398.3,870.4 400.2,872.2 400.2,873 398.4,872.7 394.9,871.2 389.9,868.7 383.7,865.2 376.6,861.1 369.1,856.5 361.6,851.6 354.6,846.8 348.4,842.3 343.5,838.4 340.1,835.2 338.5,833 338.6,831.9 340.6,831.9 344.3,833 349.5,835.2 355.9,838.2 363.2,842 370.8,846.3 378.5,850.8 385.7,855.2 392,859.3 397.1,862.9 400.6,865.7 402.5,867.6 402.6,868.3 400.8,868 397.4,866.6 392.4,864.1 386.3,860.7 379.3,856.7 372,852.1 364.6,847.3 357.7,842.6 351.6,838.1 346.8,834.2 343.5,831.1 341.8,828.9 342,827.8 343.9,827.8 347.6,828.9 352.7,831 359,834 366.1,837.7 373.7,841.9 381.2,846.3 388.3,850.7 394.5,854.8 399.5,858.3 403,861.1 404.9,862.9 404.9,863.7 403.2,863.4 399.8,862 395,859.5 388.9,856.2 382.1,852.2 374.8,847.7 367.6,843 360.8,838.3 354.8,833.9 350.1,830.1 346.8,827 345.2,824.8 345.3,823.7 347.2,823.7 350.8,824.7 355.9,826.8 362.1,829.7 369.1,833.4 376.5,837.5 383.9,841.8 390.9,846.2 397,850.2 401.9,853.7 405.4,856.4 407.2,858.2 407.3,859 405.6,858.7 402.3,857.3 397.5,855 391.6,851.7 384.8,847.8 377.7,843.3 370.6,838.7 363.9,834.1 358,829.7 353.3,825.9 350.1,822.9 348.5,820.7 348.7,819.6 350.5,819.5 354.1,820.5 359,822.6 365.1,825.5 372,829 379.3,833.1 386.6,837.4 393.5,841.6 399.5,845.6 404.4,849 407.8,851.8 409.6,853.6 409.6,854.4 408,854.1 404.7,852.7 400,850.4 394.2,847.2 387.6,843.3 380.5,839 373.5,834.4 367,829.8 361.2,825.5 356.6,821.8 353.4,818.7 351.8,816.6 352,815.5 353.8,815.4 357.3,816.4 362.2,818.4 368.2,821.2 375,824.7 382.2,828.7 389.3,832.9 396.1,837.1 402,841 406.8,844.4 410.2,847.1 411.9,848.9 412,849.7 410.4,849.4 407.2,848.1 402.6,845.8 396.8,842.7 390.3,838.9 383.4,834.6 376.5,830.1 370.1,825.6 364.4,821.3 359.8,817.6 356.7,814.6 355.2,812.5 355.3,811.4 357.1,811.3 360.6,812.2 365.3,814.2 371.2,816.9 377.9,820.4 385,824.3 392,828.5 398.7,832.6 404.5,836.4 409.2,839.8 412.5,842.5 414.3,844.2 414.4,845 412.8,844.8 409.6,843.5 405.1,841.3 399.5,838.2 393.1,834.4 386.3,830.2 379.5,825.8 373.1,821.3 367.6,817.2 363.1,813.5 360,810.5 358.5,808.4 358.7,807.3 360.5,807.2 363.8,808.1 368.5,809.9 374.3,812.7 380.9,816.1 387.8,819.9 394.7,824 401.3,828.1 407,831.9 411.7,835.2 414.9,837.8 416.6,839.6 416.7,840.4 415.2,840.1 412.1,838.9 407.6,836.7 402.1,833.7 395.8,830 389.2,825.8 382.5,821.5 376.2,817.1 370.8,813 366.4,809.3 363.4,806.4 361.9,804.3 362,803.2 363.8,803 367,803.9 371.7,805.7 377.4,808.4 383.8,811.7 390.6,815.5 397.4,819.5 403.9,823.5 409.5,827.3 414.1,830.6 417.3,833.1 419,834.9 419.1,835.7 417.6,835.5 414.5,834.3 410.2,832.2 404.7,829.2 398.6,825.6 392,821.5 385.5,817.1 379.3,812.8 374,808.8 369.6,805.2 366.7,802.3 365.2,800.2 365.3,799 367.1,798.9 370.3,799.7 374.8,801.5 380.4,804.1 386.7,807.4 393.4,811.1 400.1,815.1 406.5,819 412,822.7 416.5,825.9 419.7,828.5 421.4,830.2 421.5,831 420,830.9 417,829.7 412.7,827.6 407.4,824.7 401.3,821.1 394.9,817.1 388.5,812.8 382.4,808.6 377.2,804.6 372.9,801 370,798.2 368.5,796.1 368.7,794.9 370.4,794.8 373.5,795.6 378,797.3 383.5,799.9 389.7,803.1 396.3,806.7 402.9,810.6 409.1,814.5 414.5,818.1 418.9,821.3 422.1,823.8 423.7,825.6 423.8,826.4 422.4,826.2 419.5,825.1 415.3,823 410,820.2 404.1,816.7 397.8,812.7 391.5,808.5 385.5,804.4 380.4,800.4 376.2,796.9 373.3,794 371.9,792 372,790.8 373.6,790.6 376.7,791.4 381.1,793.1 386.5,795.6 392.6,798.7 399.1,802.3 405.6,806.1 411.6,809.9 417,813.5 421.4,816.7 424.4,819.2 426.1,820.9 426.2,821.7 424.8,821.6 421.9,820.5 417.8,818.5 412.7,815.7 406.9,812.3 400.7,808.4 394.5,804.2 388.7,800.1 383.5,796.2 379.5,792.8 376.6,789.9 375.2,787.9 375.3,786.7 376.9,786.5 380,787.3 384.3,788.9 389.6,791.3 395.6,794.4 401.9,797.9 408.3,801.7 414.2,805.4 419.5,809 423.8,812.1 426.8,814.5 428.4,816.2 428.5,817.1 427.2,816.9 424.4,815.9 420.4,813.9 415.3,811.2 409.6,807.8 403.5,804 397.5,799.9 391.8,795.9 386.7,792 382.7,788.6 379.9,785.8 378.6,783.8 378.7,782.6 380.2,782.4 383.2,783.1 387.4,784.7 392.6,787 398.5,790.1 404.7,793.5 411,797.2 416.8,800.9 422,804.4 426.2,807.4 429.2,809.9 430.8,811.6 430.9,812.4 429.6,812.3 426.8,811.3 422.9,809.4 418,806.7 412.4,803.4 406.4,799.6 400.5,795.6 394.9,791.6 389.9,787.8 386,784.5 383.3,781.7 381.9,779.7 382,778.5 383.5,778.3 386.5,778.9 390.6,780.5 395.7,782.8 401.4,785.7 407.5,789.1 413.6,792.7 419.4,796.3 424.5,799.8 428.6,802.8 431.6,805.2 433.1,806.9 433.3,807.7 432,807.7 429.3,806.7 425.4,804.8 420.6,802.2 415.1,798.9 409.3,795.3 403.5,791.3 398,787.4 393.1,783.7 389.3,780.3 386.6,777.6 385.2,775.6 385.3,774.4 386.8,774.1 389.7,774.8 393.7,776.3 398.7,778.5 404.3,781.4 410.3,784.7 416.3,788.2 422,791.8 427,795.2 431.1,798.2 433.9,800.6 435.5,802.2 435.6,803.1 434.4,803 431.8,802.1 428,800.3 423.3,797.7 417.9,794.5 412.2,790.9 406.5,787 401.1,783.2 396.4,779.5 392.6,776.2 389.9,773.5 388.6,771.5 388.7,770.3 390.1,770 392.9,770.6 396.9,772 401.7,774.2 407.3,777 413.2,780.3 419,783.8 424.6,787.3 429.5,790.6 433.5,793.5 436.3,795.9 437.8,797.6 438,798.4 436.8,798.4 434.2,797.5 430.5,795.7 425.9,793.2 420.7,790.1 415.1,786.5 409.5,782.7 404.2,778.9 399.6,775.3 395.8,772 393.2,769.3 391.9,767.3 392,766.2 393.4,765.9 396.1,766.4 400,767.8 404.8,770 410.2,772.7 416,775.9 421.7,779.3 427.2,782.7 432,786 435.9,788.9 438.7,791.3 440.2,792.9 440.4,793.8 439.2,793.7 436.7,792.9 433.1,791.1 428.6,788.7 423.4,785.7 418,782.2 412.5,778.5 407.3,774.7 402.8,771.1 399.1,767.9 396.6,765.2 395.3,763.2 395.3,762.1 396.7,761.7 399.4,762.3 403.1,763.6 407.8,765.7 413.1,768.4 418.8,771.5 424.4,774.8 429.8,778.2 434.5,781.4 438.3,784.3 441.1,786.6 442.6,788.2 442.7,789.1 441.6,789.1 439.2,788.3 435.7,786.6 431.3,784.2 426.2,781.2 420.9,777.8 415.5,774.2 410.4,770.5 406,766.9 402.4,763.7 399.9,761.1 398.6,759.1 398.6,757.9 400,757.6 402.6,758.1 406.3,759.4 410.9,761.4 416.1,764 421.6,767.1 427.1,770.3 432.3,773.7 437,776.8 440.7,779.7 443.4,782 444.9,783.6 445.1,784.4 444,784.5 441.6,783.7 438.2,782 433.9,779.7 429,776.8 423.8,773.5 418.5,769.9 413.5,766.2 409.2,762.7 405.7,759.6 403.2,757 401.9,755 402,753.8 403.3,753.5 405.8,753.9 409.4,755.2 413.9,757.1 419,759.7 424.4,762.6 429.8,765.9 434.9,769.1 439.5,772.3 443.2,775 445.8,777.3 447.3,778.9 447.5,779.8 446.4,779.8 444.1,779.1 440.8,777.5 436.6,775.2 431.8,772.4 426.6,769.1 421.5,765.6 416.7,762 412.4,758.6 408.9,755.5 406.5,752.9 405.3,750.9 405.3,749.7 406.6,749.3 409,749.7 412.6,750.9 416.9,752.8 421.9,755.3 427.2,758.2 432.5,761.4 437.5,764.6 441.9,767.7 445.6,770.4 448.2,772.6 449.6,774.3 449.8,775.1 448.8,775.2 446.6,774.5 443.3,772.9 439.2,770.7 434.6,767.9 429.5,764.7 424.5,761.3 419.8,757.8 415.6,754.4 412.2,751.3 409.8,748.8 408.6,746.8 408.6,745.6 409.9,745.2 412.3,745.6 415.7,746.7 420,748.6 424.8,751 430,753.8 435.2,756.9 440.1,760.1 444.4,763.1 448,765.8 450.6,768 452,769.6 452.2,770.5 451.2,770.6 449.1,769.9 445.9,768.4 441.9,766.2 437.3,763.5 432.4,760.4 427.5,757 422.9,753.5 418.8,750.2 415.5,747.2 413.2,744.6 412,742.7 412,741.5 413.2,741.1 415.5,741.4 418.8,742.5 423,744.3 427.7,746.6 432.8,749.4 437.8,752.4 442.6,755.5 446.9,758.5 450.4,761.1 452.9,763.3 454.3,764.9 454.6,765.8 453.6,765.9 451.5,765.3 448.5,763.8 444.6,761.8 440.1,759.1 435.3,756 430.6,752.7 426,749.3 422,746 418.8,743 416.5,740.5 415.3,738.6 415.3,737.4 416.4,736.9 418.7,737.2 422,738.3 426,740 430.6,742.3 435.6,745 440.5,748 445.2,751 449.4,753.9 452.8,756.5 455.3,758.7 456.7,760.3 456.9,761.1 456,761.3 454,760.7 451,759.3 447.2,757.3 442.9,754.7 438.2,751.7 433.6,748.4 429.1,745.1 425.2,741.8 422.1,738.9 419.8,736.4 418.6,734.5 418.6,733.3 419.7,732.8 421.9,733.1 425.1,734.1 429,735.7 433.6,737.9 438.4,740.6 443.2,743.5 447.8,746.4 451.9,749.3 455.2,751.9 457.7,754 459.1,755.6 459.3,756.5 458.4,756.7 456.5,756.1 453.6,754.8 449.9,752.8 445.7,750.3 441.1,747.3 436.6,744.1 432.3,740.8 428.4,737.7 425.3,734.8 423.1,732.3" stroke="#ee86b6" stroke-width="1"/>
<path d="M297,898L305,886" stroke="#7fd9a0"/><path d="M404.9,267.6L404.8,269.9 402.6,273.2 398.3,277.4 392.3,282.2 384.8,287.3 376.3,292.6 367.4,297.6 358.5,302.1 350.1,305.8 342.9,308.6 337,310.2 333,310.6 331,309.8 331.2,307.8 333.6,304.7 338,300.8 344.1,296.2 351.6,291.3 360.2,286.4 369.2,281.6 378.1,277.4 386.5,273.9 393.9,271.4 399.8,270.1 403.9,269.9 405.9,271 405.8,273.3 403.6,276.6 399.4,280.7 393.4,285.5 386,290.6 377.6,295.8 368.7,300.8 359.9,305.2 351.7,308.9 344.5,311.6 338.8,313.1 334.8,313.5 332.9,312.6 333.1,310.6 335.5,307.6 339.8,303.7 345.9,299.2 353.4,294.3 361.8,289.4 370.7,284.7 379.6,280.5 387.9,277.1 395.2,274.7 401,273.4 405,273.3 407,274.4 406.9,276.6 404.6,279.9 400.4,284.1 394.5,288.8 387.1,293.9 378.8,299 370.1,303.9 361.4,308.3 353.3,311.9 346.2,314.5 340.5,316.1 336.6,316.4 334.7,315.5 335,313.5 337.3,310.4 341.7,306.5 347.7,302.1 355.1,297.2 363.5,292.4 372.3,287.7 381,283.6 389.2,280.3 396.4,277.9 402.1,276.7 406.1,276.6 408,277.7 407.9,280 405.7,283.3 401.5,287.4 395.6,292.1 388.3,297.2 380.1,302.2 371.5,307.1 362.9,311.4 354.8,314.9 347.8,317.5 342.2,319 338.4,319.3 336.6,318.4 336.9,316.3 339.2,313.3 343.5,309.4 349.5,305 356.8,300.2 365.1,295.4 373.8,290.8 382.5,286.8 390.6,283.5 397.7,281.2 403.3,280 407.2,279.9 409.1,281.1 408.9,283.4 406.7,286.7 402.5,290.8 396.7,295.4 389.5,300.4 381.4,305.5 372.8,310.2 364.3,314.5 356.4,318 349.5,320.5 344,321.9 340.2,322.2 338.4,321.2 338.7,319.2 341.1,316.1 345.4,312.3 351.3,307.9 358.6,303.1 366.7,298.4 375.4,293.9 383.9,289.9 391.9,286.7 398.9,284.4 404.5,283.3 408.3,283.3 410.2,284.5 410,286.8 407.7,290 403.6,294.1 397.8,298.8 390.7,303.7 382.6,308.7 374.2,313.4 365.8,317.6 358,321 351.1,323.5 345.7,324.8 342,325 340.3,324.1 340.6,322 343,319 347.2,315.2 353.1,310.8 360.3,306.1 368.4,301.4 376.9,296.9 385.4,293 393.3,289.9 400.1,287.7 405.6,286.6 409.4,286.6 411.2,287.8 411,290.1 408.8,293.4 404.7,297.5 398.9,302.1 391.9,307 383.9,311.9 375.6,316.5 367.3,320.7 359.5,324 352.8,326.4 347.5,327.8 343.8,327.9 342.2,326.9 342.5,324.9 344.8,321.8 349,318 354.9,313.7 362,309 370,304.4 378.4,300 386.8,296.2 394.6,293.1 401.4,290.9 406.8,289.9 410.5,290 412.3,291.2 412,293.5 409.8,296.8 405.7,300.8 400,305.4 393,310.2 385.2,315.1 376.9,319.7 368.7,323.8 361.1,327 354.5,329.4 349.2,330.7 345.7,330.8 344,329.8 344.4,327.7 346.7,324.7 350.9,320.9 356.7,316.6 363.7,312 371.6,307.4 380,303.1 388.2,299.3 395.9,296.3 402.6,294.2 407.9,293.2 411.6,293.3 413.3,294.6 413.1,296.9 410.8,300.2 406.8,304.2 401.1,308.7 394.2,313.5 386.5,318.3 378.3,322.8 370.2,326.8 362.7,330.1 356.1,332.4 351,333.6 347.5,333.7 345.9,332.7 346.2,330.6 348.6,327.6 352.7,323.8 358.4,319.5 365.4,315 373.3,310.4 381.5,306.2 389.7,302.5 397.3,299.5 403.9,297.5 409.1,296.5 412.7,296.7 414.4,297.9 414.1,300.3 411.9,303.5 407.9,307.5 402.3,312 395.4,316.8 387.7,321.5 379.7,326 371.7,329.9 364.3,333.1 357.8,335.3 352.7,336.5 349.3,336.6 347.7,335.5 348.1,333.4 350.4,330.4 354.5,326.7 360.2,322.4 367.1,317.9 374.9,313.4 383,309.2 391.1,305.6 398.6,302.7 405.1,300.7 410.3,299.8 413.8,300 415.4,301.3 415.1,303.6 412.9,306.9 408.9,310.9 403.4,315.3 396.6,320 389,324.7 381.1,329.1 373.2,333 365.8,336.1 359.5,338.3 354.5,339.4 351.1,339.5 349.6,338.4 350,336.3 352.3,333.3 356.4,329.6 362,325.3 368.9,320.9 376.5,316.5 384.6,312.3 392.5,308.7 399.9,305.9 406.3,304 411.4,303.1 414.9,303.3 416.5,304.7 416.2,307 414,310.3 410,314.2 404.5,318.6 397.8,323.3 390.3,327.9 382.4,332.3 374.7,336.1 367.4,339.1 361.2,341.3 356.2,342.3 352.9,342.3 351.4,341.2 351.9,339.1 354.2,336.1 358.2,332.4 363.8,328.3 370.6,323.9 378.1,319.5 386.1,315.4 393.9,311.9 401.2,309.1 407.6,307.2 412.6,306.4 415.9,306.7 417.5,308 417.2,310.4 415,313.6 411.1,317.5 405.6,321.9 399,326.6 391.6,331.1 383.8,335.4 376.1,339.2 369,342.2 362.8,344.2 358,345.3 354.7,345.2 353.3,344.1 353.7,342 356,339 360,335.3 365.6,331.2 372.3,326.8 379.7,322.5 387.6,318.5 395.3,315 402.5,312.3 408.8,310.5 413.7,309.7 417,310 418.6,311.4 418.2,313.8 416.1,317 412.2,320.9 406.8,325.2 400.2,329.8 392.9,334.3 385.2,338.6 377.6,342.2 370.6,345.2 364.5,347.2 359.7,348.2 356.6,348.1 355.1,347 355.6,344.8 357.9,341.9 361.9,338.2 367.3,334.1 374,329.8 381.4,325.5 389.1,321.6 396.7,318.2 403.9,315.5 410,313.8 414.9,313 418.1,313.4 419.6,314.8 419.3,317.1 417.1,320.4 413.2,324.2 407.9,328.6 401.4,333.1 394.2,337.5 386.6,341.7 379.1,345.3 372.2,348.2 366.2,350.1 361.5,351.1 358.4,351 357,349.8 357.5,347.7 359.7,344.7 363.7,341.1 369.1,337 375.7,332.8 383,328.6 390.6,324.7 398.2,321.3 405.2,318.7 411.2,317 416,316.4 419.2,316.7 420.7,318.1 420.3,320.5 418.2,323.7 414.3,327.6 409.1,331.9 402.7,336.3 395.5,340.7 388,344.8 380.6,348.4 373.8,351.2 367.9,353.1 363.3,354 360.2,353.9 358.9,352.7 359.3,350.5 361.6,347.6 365.5,344 370.9,339.9 377.4,335.7 384.6,331.6 392.1,327.8 399.6,324.5 406.5,321.9 412.4,320.3 417.1,319.7 420.3,320.1 421.7,321.5 421.3,323.9 419.2,327.1 415.4,330.9 410.2,335.2 403.9,339.6 396.8,343.9 389.4,348 382.1,351.5 375.4,354.2 369.6,356.1 365,356.9 362,356.7 360.7,355.5 361.2,353.4 363.5,350.4 367.3,346.9 372.6,342.9 379,338.7 386.2,334.6 393.6,330.9 401,327.6 407.8,325.2 413.7,323.6 418.3,323 421.4,323.4 422.8,324.9 422.4,327.3 420.2,330.4 416.5,334.2 411.3,338.5 405.1,342.8 398.1,347.1 390.8,351.1 383.6,354.5 377,357.2 371.3,359 366.8,359.8 363.8,359.6 362.6,358.4 363.1,356.2 365.3,353.3 369.2,349.7 374.4,345.8 380.7,341.7 387.8,337.7 395.1,333.9 402.4,330.8 409.1,328.4 414.9,326.8 419.4,326.3 422.5,326.8 423.8,328.2 423.4,330.6 421.3,333.8 417.6,337.6 412.5,341.8 406.3,346.1 399.4,350.3 392.2,354.2 385.2,357.6 378.6,360.2 373,362 368.6,362.7 365.7,362.5 364.4,361.2 364.9,359.1 367.2,356.2 371,352.6 376.2,348.7 382.4,344.7 389.4,340.7 396.6,337 403.8,334 410.4,331.6 416.1,330.1 420.6,329.6 423.5,330.1 424.9,331.6 424.5,334 422.4,337.2 418.7,340.9 413.6,345.1 407.5,349.3 400.7,353.5 393.6,357.4 386.7,360.7 380.2,363.2 374.7,364.9 370.3,365.6 367.5,365.4 366.3,364.1 366.8,361.9 369,359 372.8,355.5 377.9,351.7 384.1,347.6 391,343.7 398.1,340.1 405.2,337.1 411.7,334.8 417.3,333.4 421.7,332.9 424.6,333.5 425.9,335 425.5,337.4 423.4,340.5 419.8,344.3 414.8,348.3 408.8,352.6 402.1,356.7 395.1,360.5 388.2,363.7 381.8,366.2 376.4,367.9 372.1,368.5 369.3,368.2 368.1,367 368.7,364.8 370.9,361.9 374.6,358.4 379.7,354.6 385.8,350.6 392.5,346.8 399.6,343.2 406.5,340.3 413,338 418.5,336.7 422.8,336.3 425.7,336.8 427,338.3 426.5,340.7 424.5,343.9 420.9,347.6 415.9,351.6 410,355.8 403.4,359.9 396.5,363.6 389.7,366.8 383.4,369.2 378.1,370.8 373.9,371.5 371.1,371.1 370,369.8 370.5,367.7 372.7,364.8 376.4,361.3 381.4,357.5 387.4,353.6 394.1,349.8 401.1,346.3 407.9,343.4 414.3,341.3 419.7,339.9 424,339.6 426.8,340.2 428,341.7 427.6,344.1 425.5,347.2 422,350.9 417.1,354.9 411.2,359.1 404.7,363.1 397.9,366.7 391.2,369.9 385.1,372.2 379.8,373.8 375.6,374.4 373,374 371.9,372.7 372.4,370.5 374.6,367.6 378.2,364.2 383.2,360.5 389.1,356.6 395.7,352.8 402.6,349.4 409.3,346.6 415.5,344.5 420.9,343.2 425.1,342.9 427.9,343.5 429.1,345.1 428.6,347.5 426.6,350.6 423,354.2 418.3,358.2 412.5,362.3 406,366.3 399.3,369.9 392.7,372.9 386.7,375.2 381.5,376.7 377.4,377.3 374.8,376.9 373.7,375.5 374.3,373.4 376.4,370.5 380,367.1 384.9,363.4 390.8,359.6 397.3,355.9 404.1,352.6 410.7,349.8 416.8,347.7 422.1,346.5 426.2,346.2 428.9,346.9 430.1,348.5 429.7,350.9 427.6,354 424.1,357.6 419.4,361.5 413.7,365.5 407.4,369.4 400.8,373 394.3,376 388.3,378.2 383.2,379.7 379.2,380.2 376.6,379.7 375.6,378.4 376.1,376.2 378.3,373.4 381.8,370 386.7,366.3 392.4,362.6 398.9,358.9 405.5,355.7 412.1,352.9 418.1,350.9 423.3,349.8 427.3,349.5 430,350.2 431.2,351.8 430.7,354.2 428.7,357.3 425.3,360.9 420.6,364.8 414.9,368.8 408.7,372.6 402.2,376.1 395.8,379 389.9,381.2 384.9,382.6 381,383.1 378.5,382.6 377.4,381.2 378,379.1 380.1,376.2 383.7,372.9 388.4,369.3 394.1,365.5 400.4,362 407,358.8 413.4,356.1 419.4,354.2 424.5,353.1 428.5,352.9 431.1,353.6 432.2,355.2 431.7,357.6 429.8,360.7 426.4,364.2 421.7,368.1 416.2,372 410,375.8 403.6,379.2 397.3,382.1 391.5,384.2 386.6,385.5 382.8,386 380.3,385.5 379.3,384.1 379.9,381.9 382,379.1 385.5,375.8 390.1,372.2 395.8,368.5 402,365 408.5,361.9 414.8,359.3 420.7,357.4 425.7,356.3 429.6,356.2 432.2,356.9 433.2,358.6 432.8,361 430.8,364 427.5,367.6 422.9,371.4 417.4,375.2 411.4,379 405.1,382.3 398.9,385.1 393.2,387.2 388.3,388.5 384.6,388.9 382.1,388.3 381.2,387 381.7,384.8 383.8,382 387.3,378.7 391.9,375.1 397.4,371.5 403.6,368.1 409.9,365 416.2,362.5 421.9,360.6 426.9,359.6 430.7,359.5 433.2,360.3 434.3,361.9 433.8,364.3 431.9,367.4 428.6,370.9 424.1,374.7 418.7,378.5 412.7,382.1 406.5,385.4 400.4,388.2 394.8,390.2 390,391.4 386.3,391.8 384,391.2 383,389.8 383.6,387.6 385.6,384.9 389.1,381.6 393.6,378.1 399.1,374.5 405.1,371.1 411.4,368.1 417.5,365.6 423.2,363.9 428.1,362.9 431.8,362.8 434.3,363.6 435.3,365.3 434.9,367.7 433,370.7 429.7,374.2 425.3,377.9 419.9,381.7 414.1,385.3 407.9,388.5 402,391.2 396.5,393.2 391.7,394.4 388.1,394.7 385.8,394.1 384.9,392.7 385.5,390.5 387.5,387.7 390.8,384.5 395.3,381 400.7,377.5 406.7,374.2 412.9,371.2 418.9,368.8 424.5,367.1 429.3,366.2 433,366.2 435.4,367 436.4,368.7 435.9,371.1 434,374.1 430.8,377.5 426.4,381.2 421.2,384.9 415.4,388.5 409.4,391.6 403.5,394.3 398.1,396.2 393.5,397.3 389.9,397.6 387.6,397 386.7,395.5 387.3,393.4 389.3,390.6 392.6,387.4 397.1,384 402.4,380.5 408.2,377.2 414.3,374.3 420.3,372 425.7,370.3 430.4,369.5 434.1,369.5 436.5,370.4 437.4,372 437,374.4 435.1,377.4 431.9,380.8 427.6,384.5 422.5,388.2 416.8,391.6 410.8,394.8 405.1,397.3 399.7,399.2 395.2,400.2 391.7,400.5 389.5,399.8 388.6,398.4 389.2,396.2 391.2,393.5 394.4,390.3 398.8,386.9 404,383.5 409.8,380.3 415.8,377.5 421.6,375.2 427,373.6 431.6,372.8 435.2,372.8 437.5,373.7 438.5,375.4 438,377.8 436.2,380.8 433,384.2 428.8,387.8 423.7,391.4 418.1,394.8 412.3,397.9 406.6,400.4 401.4,402.2 396.9,403.2 393.5,403.4 391.3,402.7 390.5,401.2 391,399.1 393,396.4 396.2,393.2 400.5,389.9 405.7,386.5 411.3,383.4 417.2,380.6 423,378.4 428.3,376.8 432.8,376.1 436.3,376.2 438.6,377.1 439.5,378.8 439.1,381.2 437.2,384.1 434.1,387.5 430,391 425,394.6 419.5,398 413.8,401 408.2,403.4 403,405.1 398.7,406.1 395.3,406.2 393.1,405.6 392.3,404.1 392.9,401.9 394.8,399.2 398,396.1 402.2,392.8 407.3,389.5 412.9,386.4 418.7,383.7 424.3,381.6 429.5,380.1 434,379.4 437.4,379.5 439.7,380.4 440.6,382.1 440.1,384.5 438.3,387.5 435.3,390.8 431.2,394.3 426.3,397.8 420.8,401.1 415.2,404.1 409.7,406.4 404.7,408.1 400.4,409 397.1,409.1 395,408.4 394.2,407 394.8,404.8 396.7,402.1 399.8,399 404,395.8 408.9,392.5 414.4,389.5 420.1,386.8 425.7,384.7 430.8,383.3 435.2,382.7 438.5,382.8 440.7,383.8 441.6,385.5 441.2,387.9 439.4,390.8 436.4,394.1 432.4,397.6 427.5,401 422.2,404.3 416.7,407.2 411.3,409.5 406.3,411.1 402.1,412 398.9,412 396.8,411.3 396,409.8 396.6,407.7 398.5,405 401.6,402 405.7,398.7 410.6,395.6 416,392.6 421.5,390 427,387.9 432,386.6 436.3,386 439.6,386.2 441.8,387.1 442.7,388.9 442.2,391.3 440.5,394.2 437.5,397.4 433.6,400.8 428.8,404.3 423.6,407.4 418.2,410.2 412.9,412.5 408,414.1 403.8,414.9 400.7,414.9 398.7,414.2 397.9,412.7 398.5,410.5 400.3,407.9 403.3,404.9 407.4,401.7 412.2,398.6 417.5,395.6 423,393.1 428.3,391.1 433.3,389.8 437.5,389.3 440.8,389.5 442.9,390.5 443.7,392.2 443.3,394.6 441.5,397.5 438.6,400.7 434.8,404.1 430.1,407.5 425,410.6 419.6,413.3 414.4,415.5 409.6,417.1 405.6,417.8 402.5,417.8 400.5,417 399.8,415.5 400.3,413.4 402.1,410.7 405.1,407.8 409.1,404.7 413.8,401.6 419,398.7 424.4,396.2 429.7,394.3 434.5,393.1 438.7,392.6 441.9,392.8 443.9,393.9 444.8,395.6 444.3,398 442.6,400.9 439.8,404 436,407.4 431.4,410.7 426.3,413.8 421.1,416.4 416,418.6 411.3,420 407.3,420.8 404.3,420.7 402.3,419.9 401.6,418.4 402.2,416.2 404,413.6 406.9,410.7 410.8,407.6 415.4,404.6 420.5,401.8 425.8,399.4 431,397.5 435.8,396.3 439.8,395.9 443,396.2 445,397.2 445.8,399 445.4,401.4 443.7,404.2 440.9,407.4 437.2,410.6 432.7,413.9 427.7,416.9 422.6,419.5 417.6,421.6 413,423 409.1,423.7 406.1,423.6 404.2,422.8 403.5,421.2 404,419.1 405.8,416.5 408.7,413.6 412.5,410.6 417.1,407.6 422.1,404.9 427.3,402.5 432.3,400.7 437,399.6 441,399.2 444.1,399.5 446.1,400.6 446.9,402.4 446.4,404.7 444.8,407.5 442,410.7 438.4,413.9 434,417.1 429.1,420.1 424.1,422.6 419.1,424.6 414.6,426 410.8,426.6 407.9,426.5 406,425.6 405.3,424.1 405.9,422 407.6,419.4 410.4,416.5 414.2,413.5 418.7,410.6 423.6,407.9 428.7,405.7 433.7,403.9 438.2,402.8 442.2,402.5 445.2,402.8 447.1,403.9 447.9,405.7 447.5,408.1 445.9,410.9 443.2,414 439.6,417.2 435.3,420.3 430.5,423.2 425.6,425.7 420.7,427.6 416.3,428.9 412.6,429.5 409.7,429.4 407.9,428.5 407.2,426.9 407.7,424.8 409.4,422.3 412.2,419.5 415.9,416.5 420.3,413.6 425.1,411 430.1,408.8 435,407.1 439.5,406.1 443.3,405.8 446.3,406.2 448.2,407.3 449,409.1 448.5,411.4 447,414.2 444.3,417.3 440.8,420.4 436.6,423.5 431.9,426.3 427,428.8 422.3,430.7 418,431.9 414.3,432.5 411.5,432.3 409.7,431.4 409.1,429.8 409.6,427.7 411.2,425.2 414,422.4 417.6,419.5 421.9,416.7 426.6,414.1 431.5,411.9 436.3,410.3 440.7,409.3 444.5,409.1 447.4,409.5 449.3,410.7 450,412.5 449.6,414.8 448.1,417.6 445.5,420.6 442,423.7 437.9,426.7 433.3,429.5 428.5,431.9 423.9,433.7 419.7,434.9 416.1,435.4 413.3,435.2 411.5,434.2 410.9,432.7 411.4,430.6 413.1,428.1 415.7,425.3 419.3,422.4 423.5,419.7" stroke="#ee86b6" stroke-width="1"/>
<path d="M330.6,276.25 L334,284 C336,288 338,289 338,294" stroke="#7fd9a0"/>
</g>
<path d="M147,335 L154.5,359 Q160,362 165.5,355.5 Z" fill="#1ee01e"/>
<path d="M1005.5,647.5 L987,623.5 Q991,619.5 997.5,620.5 Z" fill="#f20d0d"/>
<path d="M684,378.5L678.3,370.2 672.3,362.1 665.9,354.3 659.1,346.8 652,339.6 644.5,332.7 636.8,326.2 628.7,320 620.4,314.2 611.7,308.8 602.8,303.7 593.7,299.1 584.4,294.8 574.8,291 565.1,287.6 555.2,284.6 545.1,282 534.9,279.9 524.7,278.2 514.3,277 503.8,276.2 493.3,275.9 482.8,276 472.2,276.5 461.7,277.5 451.2,279 440.7,280.9 430.3,283.2 420,286 409.8,289.2 399.7,292.8 389.8,296.8 380.1,301.3 370.5,306.1 361.1,311.3 352,317 343.1,322.9 334.4,329.3 326,336 318,343 310.2,350.4 302.7,358 295.5,366 288.7,374.2 282.3,382.7 276.2,391.4 270.6,400.3 265.3,409.5 260.4,418.9 255.9,428.4 251.8,438.1 248.2,448 245,457.9 242.3,468 240,478.1 238.1,488.3 236.7,498.6 235.8,508.9 235.3,519.1 235.3,529.4 235.7,539.6 236.6,549.8 238,559.9 239.8,569.9 242,579.8 244.7,589.6 247.9,599.2 251.5,608.7 255.5,618 259.9,627 264.8,635.9 270,644.5 391.5,833.3 397.2,841.6 403.2,849.7 409.6,857.5 416.4,865 423.5,872.2 431,879.1 438.7,885.6 446.8,891.8 455.1,897.6 463.8,903 472.7,908.1 481.8,912.7 491.1,917 500.7,920.8 510.4,924.2 520.3,927.2 530.4,929.8 540.6,931.9 550.8,933.6 561.2,934.8 571.7,935.6 582.2,935.9 592.7,935.8 603.3,935.3 613.8,934.3 624.3,932.8 634.8,930.9 645.2,928.6 655.5,925.8 665.7,922.6 675.8,919 685.7,915 695.4,910.5 705,905.7 714.4,900.5 723.5,894.8 732.4,888.9 741.1,882.5 749.5,875.8 757.5,868.8 765.3,861.4 772.8,853.8 780,845.8 786.8,837.6 793.2,829.1 799.3,820.4 804.9,811.5 810.2,802.3 815.1,792.9 819.6,783.4 823.7,773.7 827.3,763.8 830.5,753.9 833.2,743.8 835.5,733.7 837.4,723.5 838.8,713.2 839.7,702.9 840.2,692.7 840.2,682.4 839.8,672.2 838.9,662 837.5,651.9 835.7,641.9 833.5,632 830.8,622.2 827.6,612.6 824,603.1 820,593.8 815.6,584.8 810.7,575.9 805.5,567.3Z" fill="url(#gbody)" stroke="#000" stroke-width="1.1"/>
<clipPath id="pk"><path d="M289.2,458L292.2,452.4 295.3,446.9 298.5,441.4 301.9,436 305.5,430.7 309.2,425.5 313,420.3 316.9,415.3 321,410.4 325.2,405.5 329.5,400.8 333.9,396.1 338.5,391.6 343.2,387.2 347.9,382.8 352.8,378.7 357.8,374.6 362.9,370.6 368.1,366.8 373.4,363.1 378.7,359.6 384.2,356.1 389.7,352.8 395.4,349.7 401.1,346.7 406.8,343.8 412.7,341.1 418.5,338.5 424.5,336 430.5,333.8 436.6,331.6 442.7,329.6 448.8,327.8 455,326.1 461.2,324.6 467.5,323.3 473.8,322.1 480,321 486.4,320.1 492.7,319.4 499,318.9 505.4,318.5 511.7,318.2 518,318.1 524.3,318.2 530.6,318.5 536.9,318.9 543.2,319.5 607.4,419.3 601.2,418.7 594.9,418.3 588.6,418.1 582.3,418 575.9,418 569.6,418.3 563.3,418.7 556.9,419.2 550.6,420 544.3,420.8 538,421.9 531.7,423.1 525.5,424.4 519.2,426 513.1,427.6 506.9,429.5 500.8,431.4 494.7,433.6 488.7,435.9 482.8,438.3 476.9,440.9 471.1,443.6 465.3,446.5 459.6,449.5 454,452.7 448.4,455.9 443,459.4 437.6,462.9 432.3,466.6 427.1,470.5 422,474.4 417.1,478.5 412.2,482.7 407.4,487 402.7,491.4 398.2,495.9 393.7,500.6 389.4,505.3 385.2,510.2 381.1,515.1 377.2,520.2 373.4,525.3 369.7,530.5 366.2,535.8 362.8,541.2 359.5,546.7 356.4,552.2 353.4,557.8Z"/></clipPath>
<g clip-path="url(#pk)">
<path d="M328.5,475.5L331,471 333.5,466.4 336.2,462 338.9,457.6 341.8,453.2 344.8,449 347.9,444.8 351.2,440.6 354.5,436.6 357.9,432.6 361.5,428.8 365.1,425 368.8,421.3 372.6,417.6 376.5,414.1 380.5,410.7 384.6,407.4 388.8,404.1 393,401 397.3,398 401.7,395.1 406.2,392.3 410.7,389.6 415.3,387 419.9,384.6 424.6,382.2 429.4,380 434.2,377.9 439.1,375.9 444,374 448.9,372.3 453.9,370.6 459,369.2 464,367.8 469.1,366.5 474.2,365.4 479.3,364.5 484.5,363.6 489.6,362.9 494.8,362.3 500,361.8 505.1,361.5 510.3,361.3 515.5,361.3 520.7,361.3 525.8,361.5 530.9,361.9 536.1,362.3 621.9,495.8 616.8,495.3 611.7,495 606.5,494.8 601.4,494.7 596.2,494.8 591,495 585.8,495.3 580.7,495.7 575.5,496.3 570.4,497.1 565.2,497.9 560.1,498.9 555,500 549.9,501.2 544.8,502.6 539.8,504.1 534.8,505.7 529.9,507.5 525,509.3 520.1,511.3 515.3,513.4 510.5,515.7 505.8,518 501.2,520.5 496.6,523.1 492,525.7 487.6,528.5 483.2,531.5 478.9,534.5 474.6,537.6 470.5,540.8 466.4,544.2 462.4,547.6 458.5,551.1 454.7,554.7 451,558.4 447.3,562.2 443.8,566.1 440.4,570 437.1,574.1 433.8,578.2 430.7,582.4 427.7,586.7 424.8,591 422,595.4 419.4,599.9 416.8,604.4 414.4,609Z" fill="url(#gfloor)"/>
<path d="M289.2,458L292.2,452.4 295.3,446.9 298.5,441.4 301.9,436 305.5,430.7 309.2,425.5 313,420.3 316.9,415.3 321,410.4 325.2,405.5 329.5,400.8 333.9,396.1 338.5,391.6 343.2,387.2 347.9,382.8 352.8,378.7 357.8,374.6 362.9,370.6 368.1,366.8 373.4,363.1 378.7,359.6 384.2,356.1 389.7,352.8 395.4,349.7 401.1,346.7 406.8,343.8 412.7,341.1 418.5,338.5 424.5,336 430.5,333.8 436.6,331.6 442.7,329.6 448.8,327.8 455,326.1 461.2,324.6 467.5,323.3 473.8,322.1 480,321 486.4,320.1 492.7,319.4 499,318.9 505.4,318.5 511.7,318.2 518,318.1 524.3,318.2 530.6,318.5 536.9,318.9 543.2,319.5 536.1,362.3 530.9,361.9 525.8,361.5 520.7,361.3 515.5,361.3 510.3,361.3 505.1,361.5 500,361.8 494.8,362.3 489.6,362.9 484.5,363.6 479.3,364.5 474.2,365.4 469.1,366.5 464,367.8 459,369.2 453.9,370.6 448.9,372.3 444,374 439.1,375.9 434.2,377.9 429.4,380 424.6,382.2 419.9,384.6 415.3,387 410.7,389.6 406.2,392.3 401.7,395.1 397.3,398 393,401 388.8,404.1 384.6,407.4 380.5,410.7 376.5,414.1 372.6,417.6 368.8,421.3 365.1,425 361.5,428.8 357.9,432.6 354.5,436.6 351.2,440.6 347.9,444.8 344.8,449 341.8,453.2 338.9,457.6 336.2,462 333.5,466.4 331,471 328.5,475.5Z" fill="url(#gback)"/>
<path d="M289.2,458L328.5,475.5 414.4,609 375.1,591.5Z" fill="url(#gleft)"/>
<path d="M543.2,319.5L536.1,362.3 621.9,495.8 629.1,452.9Z" fill="url(#gright)"/>
<path d="M289.2,458L328.5,475.5M543.2,319.5L536.1,362.3" fill="none" stroke="#000" stroke-width="1"/>
</g>
<path d="M289.2,458L292.2,452.4 295.3,446.9 298.5,441.4 301.9,436 305.5,430.7 309.2,425.5 313,420.3 316.9,415.3 321,410.4 325.2,405.5 329.5,400.8 333.9,396.1 338.5,391.6 343.2,387.2 347.9,382.8 352.8,378.7 357.8,374.6 362.9,370.6 368.1,366.8 373.4,363.1 378.7,359.6 384.2,356.1 389.7,352.8 395.4,349.7 401.1,346.7 406.8,343.8 412.7,341.1 418.5,338.5 424.5,336 430.5,333.8 436.6,331.6 442.7,329.6 448.8,327.8 455,326.1 461.2,324.6 467.5,323.3 473.8,322.1 480,321 486.4,320.1 492.7,319.4 499,318.9 505.4,318.5 511.7,318.2 518,318.1 524.3,318.2 530.6,318.5 536.9,318.9 543.2,319.5 607.4,419.3 601.2,418.7 594.9,418.3 588.6,418.1 582.3,418 575.9,418 569.6,418.3 563.3,418.7 556.9,419.2 550.6,420 544.3,420.8 538,421.9 531.7,423.1 525.5,424.4 519.2,426 513.1,427.6 506.9,429.5 500.8,431.4 494.7,433.6 488.7,435.9 482.8,438.3 476.9,440.9 471.1,443.6 465.3,446.5 459.6,449.5 454,452.7 448.4,455.9 443,459.4 437.6,462.9 432.3,466.6 427.1,470.5 422,474.4 417.1,478.5 412.2,482.7 407.4,487 402.7,491.4 398.2,495.9 393.7,500.6 389.4,505.3 385.2,510.2 381.1,515.1 377.2,520.2 373.4,525.3 369.7,530.5 366.2,535.8 362.8,541.2 359.5,546.7 356.4,552.2 353.4,557.8Z" fill="none" stroke="#000" stroke-width="1.1" stroke-linejoin="round"/>
<g fill="none" clip-path="url(#bodyclip)">
<path d="M404.9,267.6L404.8,269.9 402.6,273.2 398.3,277.4 392.3,282.2 384.8,287.3 376.3,292.6 367.4,297.6 358.5,302.1 350.1,305.8 342.9,308.6 337,310.2 333,310.6 331,309.8 331.2,307.8 333.6,304.7 338,300.8 344.1,296.2 351.6,291.3 360.2,286.4 369.2,281.6 378.1,277.4 386.5,273.9 393.9,271.4 399.8,270.1 403.9,269.9 405.9,271 405.8,273.3 403.6,276.6 399.4,280.7 393.4,285.5 386,290.6 377.6,295.8 368.7,300.8 359.9,305.2 351.7,308.9 344.5,311.6 338.8,313.1 334.8,313.5 332.9,312.6 333.1,310.6 335.5,307.6 339.8,303.7 345.9,299.2 353.4,294.3 361.8,289.4 370.7,284.7 379.6,280.5 387.9,277.1 395.2,274.7 401,273.4 405,273.3 407,274.4 406.9,276.6 404.6,279.9 400.4,284.1 394.5,288.8 387.1,293.9 378.8,299 370.1,303.9 361.4,308.3 353.3,311.9 346.2,314.5 340.5,316.1 336.6,316.4 334.7,315.5 335,313.5 337.3,310.4 341.7,306.5 347.7,302.1 355.1,297.2 363.5,292.4 372.3,287.7 381,283.6 389.2,280.3 396.4,277.9 402.1,276.7 406.1,276.6 408,277.7 407.9,280 405.7,283.3 401.5,287.4 395.6,292.1 388.3,297.2 380.1,302.2 371.5,307.1 362.9,311.4 354.8,314.9 347.8,317.5 342.2,319 338.4,319.3 336.6,318.4 336.9,316.3 339.2,313.3 343.5,309.4 349.5,305 356.8,300.2 365.1,295.4 373.8,290.8 382.5,286.8 390.6,283.5 397.7,281.2 403.3,280 407.2,279.9 409.1,281.1 408.9,283.4 406.7,286.7 402.5,290.8 396.7,295.4 389.5,300.4 381.4,305.5 372.8,310.2 364.3,314.5 356.4,318 349.5,320.5 344,321.9 340.2,322.2 338.4,321.2 338.7,319.2 341.1,316.1 345.4,312.3 351.3,307.9 358.6,303.1 366.7,298.4 375.4,293.9 383.9,289.9 391.9,286.7 398.9,284.4 404.5,283.3 408.3,283.3 410.2,284.5 410,286.8 407.7,290 403.6,294.1 397.8,298.8 390.7,303.7 382.6,308.7 374.2,313.4 365.8,317.6 358,321 351.1,323.5 345.7,324.8 342,325 340.3,324.1 340.6,322 343,319 347.2,315.2 353.1,310.8 360.3,306.1 368.4,301.4 376.9,296.9 385.4,293 393.3,289.9 400.1,287.7 405.6,286.6 409.4,286.6 411.2,287.8 411,290.1 408.8,293.4 404.7,297.5 398.9,302.1 391.9,307 383.9,311.9 375.6,316.5 367.3,320.7 359.5,324 352.8,326.4 347.5,327.8 343.8,327.9 342.2,326.9 342.5,324.9 344.8,321.8 349,318 354.9,313.7 362,309 370,304.4 378.4,300 386.8,296.2 394.6,293.1 401.4,290.9 406.8,289.9 410.5,290 412.3,291.2 412,293.5 409.8,296.8 405.7,300.8 400,305.4 393,310.2 385.2,315.1 376.9,319.7 368.7,323.8 361.1,327 354.5,329.4 349.2,330.7 345.7,330.8 344,329.8 344.4,327.7 346.7,324.7 350.9,320.9 356.7,316.6 363.7,312 371.6,307.4 380,303.1 388.2,299.3 395.9,296.3 402.6,294.2 407.9,293.2 411.6,293.3 413.3,294.6 413.1,296.9 410.8,300.2 406.8,304.2 401.1,308.7 394.2,313.5 386.5,318.3 378.3,322.8 370.2,326.8 362.7,330.1 356.1,332.4 351,333.6 347.5,333.7 345.9,332.7 346.2,330.6 348.6,327.6 352.7,323.8 358.4,319.5 365.4,315 373.3,310.4 381.5,306.2 389.7,302.5 397.3,299.5 403.9,297.5 409.1,296.5 412.7,296.7 414.4,297.9 414.1,300.3 411.9,303.5 407.9,307.5 402.3,312 395.4,316.8 387.7,321.5 379.7,326 371.7,329.9 364.3,333.1 357.8,335.3 352.7,336.5 349.3,336.6 347.7,335.5 348.1,333.4 350.4,330.4 354.5,326.7 360.2,322.4 367.1,317.9 374.9,313.4 383,309.2 391.1,305.6 398.6,302.7 405.1,300.7 410.3,299.8 413.8,300 415.4,301.3 415.1,303.6 412.9,306.9 408.9,310.9 403.4,315.3 396.6,320 389,324.7 381.1,329.1 373.2,333 365.8,336.1 359.5,338.3 354.5,339.4 351.1,339.5 349.6,338.4 350,336.3 352.3,333.3 356.4,329.6 362,325.3 368.9,320.9 376.5,316.5 384.6,312.3 392.5,308.7 399.9,305.9 406.3,304 411.4,303.1 414.9,303.3 416.5,304.7 416.2,307 414,310.3 410,314.2 404.5,318.6 397.8,323.3 390.3,327.9 382.4,332.3 374.7,336.1 367.4,339.1 361.2,341.3 356.2,342.3 352.9,342.3 351.4,341.2 351.9,339.1 354.2,336.1 358.2,332.4 363.8,328.3 370.6,323.9 378.1,319.5 386.1,315.4 393.9,311.9 401.2,309.1 407.6,307.2 412.6,306.4 415.9,306.7 417.5,308 417.2,310.4 415,313.6 411.1,317.5 405.6,321.9 399,326.6 391.6,331.1 383.8,335.4 376.1,339.2 369,342.2 362.8,344.2 358,345.3 354.7,345.2 353.3,344.1 353.7,342 356,339 360,335.3 365.6,331.2 372.3,326.8 379.7,322.5 387.6,318.5 395.3,315 402.5,312.3 408.8,310.5 413.7,309.7 417,310 418.6,311.4 418.2,313.8 416.1,317 412.2,320.9 406.8,325.2 400.2,329.8 392.9,334.3 385.2,338.6 377.6,342.2 370.6,345.2 364.5,347.2 359.7,348.2 356.6,348.1 355.1,347 355.6,344.8 357.9,341.9 361.9,338.2 367.3,334.1 374,329.8 381.4,325.5 389.1,321.6 396.7,318.2 403.9,315.5 410,313.8 414.9,313 418.1,313.4 419.6,314.8 419.3,317.1 417.1,320.4 413.2,324.2 407.9,328.6 401.4,333.1 394.2,337.5 386.6,341.7 379.1,345.3 372.2,348.2 366.2,350.1 361.5,351.1 358.4,351 357,349.8 357.5,347.7 359.7,344.7 363.7,341.1 369.1,337 375.7,332.8 383,328.6 390.6,324.7 398.2,321.3 405.2,318.7 411.2,317 416,316.4 419.2,316.7 420.7,318.1 420.3,320.5 418.2,323.7 414.3,327.6 409.1,331.9 402.7,336.3 395.5,340.7 388,344.8 380.6,348.4 373.8,351.2 367.9,353.1 363.3,354 360.2,353.9 358.9,352.7 359.3,350.5 361.6,347.6 365.5,344 370.9,339.9 377.4,335.7 384.6,331.6 392.1,327.8 399.6,324.5 406.5,321.9 412.4,320.3 417.1,319.7 420.3,320.1 421.7,321.5 421.3,323.9 419.2,327.1 415.4,330.9 410.2,335.2 403.9,339.6 396.8,343.9 389.4,348 382.1,351.5 375.4,354.2 369.6,356.1 365,356.9 362,356.7 360.7,355.5 361.2,353.4 363.5,350.4 367.3,346.9 372.6,342.9 379,338.7 386.2,334.6 393.6,330.9 401,327.6 407.8,325.2 413.7,323.6 418.3,323 421.4,323.4 422.8,324.9 422.4,327.3 420.2,330.4 416.5,334.2 411.3,338.5 405.1,342.8 398.1,347.1 390.8,351.1 383.6,354.5 377,357.2 371.3,359 366.8,359.8 363.8,359.6 362.6,358.4 363.1,356.2 365.3,353.3 369.2,349.7 374.4,345.8 380.7,341.7 387.8,337.7 395.1,333.9 402.4,330.8 409.1,328.4 414.9,326.8 419.4,326.3 422.5,326.8 423.8,328.2 423.4,330.6 421.3,333.8 417.6,337.6 412.5,341.8 406.3,346.1 399.4,350.3 392.2,354.2 385.2,357.6 378.6,360.2 373,362 368.6,362.7 365.7,362.5 364.4,361.2 364.9,359.1 367.2,356.2 371,352.6 376.2,348.7 382.4,344.7 389.4,340.7 396.6,337 403.8,334 410.4,331.6 416.1,330.1 420.6,329.6 423.5,330.1 424.9,331.6 424.5,334 422.4,337.2 418.7,340.9 413.6,345.1 407.5,349.3 400.7,353.5 393.6,357.4 386.7,360.7 380.2,363.2 374.7,364.9 370.3,365.6 367.5,365.4 366.3,364.1 366.8,361.9 369,359 372.8,355.5 377.9,351.7 384.1,347.6 391,343.7 398.1,340.1 405.2,337.1 411.7,334.8 417.3,333.4 421.7,332.9 424.6,333.5 425.9,335 425.5,337.4 423.4,340.5 419.8,344.3 414.8,348.3 408.8,352.6 402.1,356.7 395.1,360.5 388.2,363.7 381.8,366.2 376.4,367.9 372.1,368.5 369.3,368.2 368.1,367 368.7,364.8 370.9,361.9 374.6,358.4 379.7,354.6 385.8,350.6 392.5,346.8 399.6,343.2 406.5,340.3 413,338 418.5,336.7 422.8,336.3 425.7,336.8 427,338.3 426.5,340.7 424.5,343.9 420.9,347.6 415.9,351.6 410,355.8 403.4,359.9 396.5,363.6 389.7,366.8 383.4,369.2 378.1,370.8 373.9,371.5 371.1,371.1 370,369.8 370.5,367.7 372.7,364.8 376.4,361.3 381.4,357.5 387.4,353.6 394.1,349.8 401.1,346.3 407.9,343.4 414.3,341.3 419.7,339.9 424,339.6 426.8,340.2 428,341.7 427.6,344.1 425.5,347.2 422,350.9 417.1,354.9 411.2,359.1 404.7,363.1 397.9,366.7 391.2,369.9 385.1,372.2 379.8,373.8 375.6,374.4 373,374 371.9,372.7 372.4,370.5 374.6,367.6 378.2,364.2 383.2,360.5 389.1,356.6 395.7,352.8 402.6,349.4 409.3,346.6 415.5,344.5 420.9,343.2 425.1,342.9 427.9,343.5 429.1,345.1 428.6,347.5 426.6,350.6 423,354.2 418.3,358.2 412.5,362.3 406,366.3 399.3,369.9 392.7,372.9 386.7,375.2 381.5,376.7 377.4,377.3 374.8,376.9 373.7,375.5 374.3,373.4 376.4,370.5 380,367.1 384.9,363.4 390.8,359.6 397.3,355.9 404.1,352.6 410.7,349.8 416.8,347.7 422.1,346.5 426.2,346.2 428.9,346.9 430.1,348.5 429.7,350.9 427.6,354 424.1,357.6 419.4,361.5 413.7,365.5 407.4,369.4 400.8,373 394.3,376 388.3,378.2 383.2,379.7 379.2,380.2 376.6,379.7 375.6,378.4 376.1,376.2 378.3,373.4 381.8,370 386.7,366.3 392.4,362.6 398.9,358.9 405.5,355.7 412.1,352.9 418.1,350.9 423.3,349.8 427.3,349.5 430,350.2 431.2,351.8 430.7,354.2 428.7,357.3 425.3,360.9 420.6,364.8 414.9,368.8 408.7,372.6 402.2,376.1 395.8,379 389.9,381.2 384.9,382.6 381,383.1 378.5,382.6 377.4,381.2 378,379.1 380.1,376.2 383.7,372.9 388.4,369.3 394.1,365.5 400.4,362 407,358.8 413.4,356.1 419.4,354.2 424.5,353.1 428.5,352.9 431.1,353.6 432.2,355.2 431.7,357.6 429.8,360.7 426.4,364.2 421.7,368.1 416.2,372 410,375.8 403.6,379.2 397.3,382.1 391.5,384.2 386.6,385.5 382.8,386 380.3,385.5 379.3,384.1 379.9,381.9 382,379.1 385.5,375.8 390.1,372.2 395.8,368.5 402,365 408.5,361.9 414.8,359.3 420.7,357.4 425.7,356.3 429.6,356.2 432.2,356.9 433.2,358.6 432.8,361 430.8,364 427.5,367.6 422.9,371.4 417.4,375.2 411.4,379 405.1,382.3 398.9,385.1 393.2,387.2 388.3,388.5 384.6,388.9 382.1,388.3 381.2,387 381.7,384.8 383.8,382 387.3,378.7 391.9,375.1 397.4,371.5 403.6,368.1 409.9,365 416.2,362.5 421.9,360.6 426.9,359.6 430.7,359.5 433.2,360.3 434.3,361.9 433.8,364.3 431.9,367.4 428.6,370.9 424.1,374.7 418.7,378.5 412.7,382.1 406.5,385.4 400.4,388.2 394.8,390.2 390,391.4 386.3,391.8 384,391.2 383,389.8 383.6,387.6 385.6,384.9 389.1,381.6 393.6,378.1 399.1,374.5 405.1,371.1 411.4,368.1 417.5,365.6 423.2,363.9 428.1,362.9 431.8,362.8 434.3,363.6 435.3,365.3 434.9,367.7 433,370.7 429.7,374.2 425.3,377.9 419.9,381.7 414.1,385.3 407.9,388.5 402,391.2 396.5,393.2 391.7,394.4 388.1,394.7 385.8,394.1 384.9,392.7 385.5,390.5 387.5,387.7 390.8,384.5 395.3,381 400.7,377.5 406.7,374.2 412.9,371.2 418.9,368.8 424.5,367.1 429.3,366.2 433,366.2 435.4,367 436.4,368.7 435.9,371.1 434,374.1 430.8,377.5 426.4,381.2 421.2,384.9 415.4,388.5 409.4,391.6 403.5,394.3 398.1,396.2 393.5,397.3 389.9,397.6 387.6,397 386.7,395.5 387.3,393.4 389.3,390.6 392.6,387.4 397.1,384 402.4,380.5 408.2,377.2 414.3,374.3 420.3,372 425.7,370.3 430.4,369.5 434.1,369.5 436.5,370.4 437.4,372 437,374.4 435.1,377.4 431.9,380.8 427.6,384.5 422.5,388.2 416.8,391.6 410.8,394.8 405.1,397.3 399.7,399.2 395.2,400.2 391.7,400.5 389.5,399.8 388.6,398.4 389.2,396.2 391.2,393.5 394.4,390.3 398.8,386.9 404,383.5 409.8,380.3 415.8,377.5 421.6,375.2 427,373.6 431.6,372.8 435.2,372.8 437.5,373.7 438.5,375.4 438,377.8 436.2,380.8 433,384.2 428.8,387.8 423.7,391.4 418.1,394.8 412.3,397.9 406.6,400.4 401.4,402.2 396.9,403.2 393.5,403.4 391.3,402.7 390.5,401.2 391,399.1 393,396.4 396.2,393.2 400.5,389.9 405.7,386.5 411.3,383.4 417.2,380.6 423,378.4 428.3,376.8 432.8,376.1 436.3,376.2 438.6,377.1 439.5,378.8 439.1,381.2 437.2,384.1 434.1,387.5 430,391 425,394.6 419.5,398 413.8,401 408.2,403.4 403,405.1 398.7,406.1 395.3,406.2 393.1,405.6 392.3,404.1 392.9,401.9 394.8,399.2 398,396.1 402.2,392.8 407.3,389.5 412.9,386.4 418.7,383.7 424.3,381.6 429.5,380.1 434,379.4 437.4,379.5 439.7,380.4 440.6,382.1 440.1,384.5 438.3,387.5 435.3,390.8 431.2,394.3 426.3,397.8 420.8,401.1 415.2,404.1 409.7,406.4 404.7,408.1 400.4,409 397.1,409.1 395,408.4 394.2,407 394.8,404.8 396.7,402.1 399.8,399 404,395.8 408.9,392.5 414.4,389.5 420.1,386.8 425.7,384.7 430.8,383.3 435.2,382.7 438.5,382.8 440.7,383.8 441.6,385.5 441.2,387.9 439.4,390.8 436.4,394.1 432.4,397.6 427.5,401 422.2,404.3 416.7,407.2 411.3,409.5 406.3,411.1 402.1,412 398.9,412 396.8,411.3 396,409.8 396.6,407.7 398.5,405 401.6,402 405.7,398.7 410.6,395.6 416,392.6 421.5,390 427,387.9 432,386.6 436.3,386 439.6,386.2 441.8,387.1 442.7,388.9 442.2,391.3 440.5,394.2 437.5,397.4 433.6,400.8 428.8,404.3 423.6,407.4 418.2,410.2 412.9,412.5 408,414.1 403.8,414.9 400.7,414.9 398.7,414.2 397.9,412.7 398.5,410.5 400.3,407.9 403.3,404.9 407.4,401.7 412.2,398.6 417.5,395.6 423,393.1 428.3,391.1 433.3,389.8 437.5,389.3 440.8,389.5 442.9,390.5 443.7,392.2 443.3,394.6 441.5,397.5 438.6,400.7 434.8,404.1 430.1,407.5 425,410.6 419.6,413.3 414.4,415.5 409.6,417.1 405.6,417.8 402.5,417.8 400.5,417 399.8,415.5 400.3,413.4 402.1,410.7 405.1,407.8 409.1,404.7 413.8,401.6 419,398.7 424.4,396.2 429.7,394.3 434.5,393.1 438.7,392.6 441.9,392.8 443.9,393.9 444.8,395.6 444.3,398 442.6,400.9 439.8,404 436,407.4 431.4,410.7 426.3,413.8 421.1,416.4 416,418.6 411.3,420 407.3,420.8 404.3,420.7 402.3,419.9 401.6,418.4 402.2,416.2 404,413.6 406.9,410.7 410.8,407.6 415.4,404.6 420.5,401.8 425.8,399.4 431,397.5 435.8,396.3 439.8,395.9 443,396.2 445,397.2 445.8,399 445.4,401.4 443.7,404.2 440.9,407.4 437.2,410.6 432.7,413.9 427.7,416.9 422.6,419.5 417.6,421.6 413,423 409.1,423.7 406.1,423.6 404.2,422.8 403.5,421.2 404,419.1 405.8,416.5 408.7,413.6 412.5,410.6 417.1,407.6 422.1,404.9 427.3,402.5 432.3,400.7 437,399.6 441,399.2 444.1,399.5 446.1,400.6 446.9,402.4 446.4,404.7 444.8,407.5 442,410.7 438.4,413.9 434,417.1 429.1,420.1 424.1,422.6 419.1,424.6 414.6,426 410.8,426.6 407.9,426.5 406,425.6 405.3,424.1 405.9,422 407.6,419.4 410.4,416.5 414.2,413.5 418.7,410.6 423.6,407.9 428.7,405.7 433.7,403.9 438.2,402.8 442.2,402.5 445.2,402.8 447.1,403.9 447.9,405.7 447.5,408.1 445.9,410.9 443.2,414 439.6,417.2 435.3,420.3 430.5,423.2 425.6,425.7 420.7,427.6 416.3,428.9 412.6,429.5 409.7,429.4 407.9,428.5 407.2,426.9 407.7,424.8 409.4,422.3 412.2,419.5 415.9,416.5 420.3,413.6 425.1,411 430.1,408.8 435,407.1 439.5,406.1 443.3,405.8 446.3,406.2 448.2,407.3 449,409.1 448.5,411.4 447,414.2 444.3,417.3 440.8,420.4 436.6,423.5 431.9,426.3 427,428.8 422.3,430.7 418,431.9 414.3,432.5 411.5,432.3 409.7,431.4 409.1,429.8 409.6,427.7 411.2,425.2 414,422.4 417.6,419.5 421.9,416.7 426.6,414.1 431.5,411.9 436.3,410.3 440.7,409.3 444.5,409.1 447.4,409.5 449.3,410.7 450,412.5 449.6,414.8 448.1,417.6 445.5,420.6 442,423.7 437.9,426.7 433.3,429.5 428.5,431.9 423.9,433.7 419.7,434.9 416.1,435.4 413.3,435.2 411.5,434.2 410.9,432.7 411.4,430.6 413.1,428.1 415.7,425.3 419.3,422.4 423.5,419.7" stroke="#f29cb8" stroke-width="1.2" opacity="0.9"/>
<path d="M258,427L327,470" stroke="#f0b478" stroke-width="1" opacity="0.7"/>
</g>
<path d="M805.5,567.3L810.7,575.9 815.6,584.8 820,593.8 824,603.1 827.6,612.6 830.8,622.2 833.5,632 835.7,641.9 837.5,651.9 838.9,662 839.8,672.2 840.2,682.4 840.2,692.7 839.7,702.9 838.8,713.2 837.4,723.5 835.5,733.7 833.2,743.8 830.5,753.9 827.3,763.8 823.7,773.7 819.6,783.4 815.1,792.9 810.2,802.3 804.9,811.5 799.3,820.4 793.2,829.1 786.8,837.6 780,845.8 772.8,853.8 765.3,861.4 757.5,868.8 749.5,875.8 741.1,882.5 732.4,888.9 723.5,894.8 714.4,900.5 705,905.7 695.4,910.5 685.7,915 675.8,919 665.7,922.6 655.5,925.8 645.2,928.6 634.8,930.9 624.3,932.8 613.8,934.3 603.3,935.3 592.7,935.8 582.2,935.9 571.7,935.6 561.2,934.8 550.8,933.6 540.6,931.9 530.4,929.8 520.3,927.2 510.4,924.2 500.7,920.8 491.1,917 481.8,912.7 472.7,908.1 463.8,903 455.1,897.6 446.8,891.8 438.7,885.6 431,879.1 423.5,872.2 416.4,865 409.6,857.5 403.2,849.7 397.2,841.6 391.5,833.3 386.3,824.7 381.4,815.8 377,806.8 373,797.5 369.4,788 366.2,778.4 363.5,768.6 361.3,758.7 359.5,748.7 358.1,738.6 357.2,728.4 356.8,718.2 356.8,707.9 357.3,697.7 358.2,687.4 359.6,677.1 361.5,666.9 363.8,656.8 366.5,646.7 369.7,636.8 373.3,626.9 377.4,617.2 381.9,607.7 386.8,598.3 392.1,589.1 397.7,580.2 403.8,571.5 410.2,563 417,554.8 424.2,546.8 431.7,539.2 439.5,531.8 447.5,524.8 455.9,518.1 464.6,511.7 473.5,505.8 482.6,500.1 492,494.9 501.6,490.1 511.3,485.6 521.2,481.6 531.3,478 541.5,474.8 551.8,472 562.2,469.7 572.7,467.8 583.2,466.3 593.7,465.3 604.3,464.8 614.8,464.7 625.3,465 635.8,465.8 646.2,467 656.4,468.7 666.6,470.8 676.7,473.4 686.6,476.4 696.3,479.8 705.9,483.6 715.2,487.9 724.3,492.5 733.2,497.6 741.9,503 750.2,508.8 758.3,515 766,521.5 773.5,528.4 780.6,535.6 787.4,543.1 793.8,550.9 799.8,559 805.5,567.3Z" fill="#deb964" stroke="#000" stroke-width="1.1"/>
<clipPath id="hp"><path d="M198.5,940.3L998.5,460.3 998.5,1600.3 198.5,1600.3Z"/></clipPath>
<g clip-path="url(#capclip)"><g clip-path="url(#hp)" fill="none" stroke-width="1">
<path d="M-682.5,0L6.4,1072M-633.8,0L55.1,1072M-536.2,0L152.6,1072M-487.5,0L201.4,1072M-438.8,0L250.1,1072M-390,0L298.9,1072M-292.5,0L396.4,1072M-243.8,0L445.1,1072M-195,0L493.9,1072M-146.2,0L542.6,1072M-48.8,0L640.1,1072M0,0L688.9,1072M48.8,0L737.6,1072M97.5,0L786.4,1072M195,0L883.9,1072M243.8,0L932.6,1072M292.5,0L981.4,1072M341.2,0L1030.1,1072M438.8,0L1127.6,1072M487.5,0L1176.4,1072M536.2,0L1225.1,1072M585,0L1273.9,1072M682.5,0L1371.4,1072M731.2,0L1420.1,1072M780,0L1468.9,1072M828.8,0L1517.6,1072M926.2,0L1615.1,1072M975,0L1663.9,1072M1023.8,0L1712.6,1072M1072.5,0L1761.4,1072M1170,0L1858.9,1072M1218.8,0L1907.6,1072M1267.5,0L1956.4,1072M1316.2,0L2005.1,1072M1413.8,0L2102.6,1072M1462.5,0L2151.4,1072M0,44L1503,-857.8M0,76.8L1503,-825M0,93.2L1503,-808.6M0,109.5L1503,-792.3M0,125.9L1503,-775.9M0,158.7L1503,-743.1M0,175.1L1503,-726.7M0,191.4L1503,-710.4M0,207.8L1503,-694M0,240.6L1503,-661.2M0,257L1503,-644.8M0,273.3L1503,-628.5M0,289.7L1503,-612.1M0,322.5L1503,-579.3M0,338.9L1503,-562.9M0,355.2L1503,-546.6M0,371.6L1503,-530.2M0,404.4L1503,-497.4M0,420.8L1503,-481M0,437.1L1503,-464.7M0,453.5L1503,-448.3M0,486.3L1503,-415.5M0,502.7L1503,-399.1M0,519L1503,-382.8M0,535.4L1503,-366.4M0,568.2L1503,-333.6M0,584.6L1503,-317.2M0,600.9L1503,-300.9M0,617.3L1503,-284.5M0,650.1L1503,-251.7M0,666.5L1503,-235.3M0,682.8L1503,-219M0,699.2L1503,-202.6M0,732L1503,-169.8M0,748.4L1503,-153.4M0,764.7L1503,-137.1M0,781.1L1503,-120.7M0,813.9L1503,-87.9M0,830.3L1503,-71.5M0,846.6L1503,-55.2M0,863L1503,-38.8M0,895.8L1503,-6M0,912.2L1503,10.4M0,928.5L1503,26.7M0,944.9L1503,43.1M0,977.7L1503,75.9M0,994.1L1503,92.3M0,1010.4L1503,108.6M0,1026.8L1503,125M0,1059.6L1503,157.8M0,1076L1503,174.2M0,1092.3L1503,190.5M0,1108.7L1503,206.9M0,1141.5L1503,239.7M0,1157.9L1503,256.1M0,1174.2L1503,272.4M0,1190.6L1503,288.8M0,1223.4L1503,321.6M0,1239.8L1503,338M0,1256.1L1503,354.3M0,1272.5L1503,370.7M0,1305.3L1503,403.5M0,1321.7L1503,419.9M0,1338L1503,436.2M0,1354.4L1503,452.6M0,1387.2L1503,485.4M0,1403.6L1503,501.8M0,1419.9L1503,518.1M0,1436.3L1503,534.5M0,1469.1L1503,567.3M0,1485.5L1503,583.7M0,1501.8L1503,600M0,1518.2L1503,616.4M0,1551L1503,649.2M0,1567.4L1503,665.6M0,1583.7L1503,681.9M0,1600.1L1503,698.3M0,1632.9L1503,731.1M0,1649.3L1503,747.5M0,1665.6L1503,763.8M0,1682L1503,780.2M0,1714.8L1503,813M0,1731.2L1503,829.4M0,1747.5L1503,845.7M0,1763.9L1503,862.1M0,1796.7L1503,894.9M0,1813.1L1503,911.3" stroke="#b48f3a" opacity="0.22"/>
<path d="M-585,0L103.9,1072M-341.2,0L347.6,1072M-97.5,0L591.4,1072M390,0L1078.9,1072M633.8,0L1322.6,1072M877.5,0L1566.4,1072M1121.2,0L1810.1,1072M1365,0L2053.9,1072M0,60.4L1503,-841.4M0,142.3L1503,-759.5M0,224.2L1503,-677.6M0,306.1L1503,-595.7M0,388L1503,-513.8M0,469.9L1503,-431.9M0,551.8L1503,-350M0,633.7L1503,-268.1M0,715.6L1503,-186.2M0,879.4L1503,-22.4M0,961.3L1503,59.5M0,1043.2L1503,141.4M0,1125.1L1503,223.3M0,1207L1503,305.2M0,1288.9L1503,387.1M0,1370.8L1503,469M0,1452.7L1503,550.9M0,1534.6L1503,632.8M0,1616.5L1503,714.7M0,1698.4L1503,796.6M0,1780.3L1503,878.5" stroke="#8f6f25" opacity="0.35"/>
<path d="M146.25,0L835.1,1072" stroke="#e0703a" opacity="0.8"/>
</g></g>
<g fill="none" stroke-linejoin="round" stroke-linecap="round">
<path d="M328.5,475.5L331,471 333.5,466.4 336.2,462 338.9,457.6 341.8,453.2 344.8,449 347.9,444.8 351.2,440.6 354.5,436.6 357.9,432.6 361.5,428.8 365.1,425 368.8,421.3 372.6,417.6 376.5,414.1 380.5,410.7 384.6,407.4 388.8,404.1 393,401 397.3,398 401.7,395.1 406.2,392.3 410.7,389.6 415.3,387 419.9,384.6 424.6,382.2 429.4,380 434.2,377.9 439.1,375.9 444,374 448.9,372.3 453.9,370.6 459,369.2 464,367.8 469.1,366.5 474.2,365.4 479.3,364.5 484.5,363.6 489.6,362.9 494.8,362.3 500,361.8 505.1,361.5 510.3,361.3 515.5,361.3 520.7,361.3 525.8,361.5 530.9,361.9 536.1,362.3 600.3,462.1 595.2,461.7 590,461.3 584.9,461.1 579.7,461.1 574.6,461.1 569.4,461.3 564.2,461.7 559,462.1 553.9,462.7 548.7,463.4 543.6,464.3 538.4,465.3 533.3,466.4 528.2,467.6 523.2,469 518.2,470.5 513.2,472.1 508.2,473.8 503.3,475.7 498.5,477.7 493.6,479.8 488.9,482 484.2,484.4 479.5,486.8 474.9,489.4 470.4,492.1 465.9,494.9 461.5,497.8 457.2,500.8 453,504 448.8,507.2 444.8,510.5 440.8,513.9 436.9,517.5 433,521.1 429.3,524.8 425.7,528.6 422.2,532.4 418.7,536.4 415.4,540.5 412.2,544.6 409.1,548.8 406.1,553 403.2,557.4 400.4,561.8 397.7,566.2 395.2,570.8 392.8,575.4Z" stroke="#4a3cdc" stroke-width="5" opacity="0.62"/>
<path d="M670.3,440.6L673,444.7 675.7,448.9 678.2,453.2 680.6,457.5 682.8,461.9 685,466.4 687,470.9 688.9,475.5 690.7,480.1 692.3,484.8 693.9,489.5 695.2,494.3 696.5,499.1 697.6,504 698.6,508.9 699.5,513.8 700.2,518.7 700.8,523.7 701.2,528.7 701.5,533.7 701.7,538.7 701.8,543.8 701.7,548.8 701.5,553.9 701.1,558.9 700.6,563.9 700,569 699.2,574 698.3,579 697.3,584 696.1,589 694.8,593.9 693.4,598.8 691.8,603.7 690.1,608.6 688.3,613.4 686.4,618.2 684.3,622.9 682.1,627.6 679.8,632.2 677.4,636.8 674.8,641.3 672.2,645.8 669.4,650.2 666.5,654.5 663.5,658.8 660.4,663 657.1,667.1 721.4,766.9 724.6,762.8 727.7,758.6 730.7,754.4 733.6,750 736.4,745.6 739.1,741.2 741.6,736.6 744.1,732.1 746.4,727.4 748.6,722.7 750.6,718 752.6,713.2 754.4,708.4 756.1,703.6 757.6,698.7 759,693.7 760.3,688.8 761.5,683.8 762.5,678.8 763.4,673.8 764.2,668.8 764.8,663.8 765.3,658.7 765.7,653.7 765.9,648.6 766,643.6 766,638.6 765.8,633.5 765.5,628.5 765,623.5 764.4,618.6 763.7,613.6 762.8,608.7 761.9,603.8 760.7,598.9 759.5,594.1 758.1,589.3 756.6,584.6 754.9,579.9 753.2,575.3 751.3,570.7 749.2,566.2 747.1,561.7 744.8,557.3 742.4,553 739.9,548.7 737.3,544.5 734.5,540.4Z" stroke="#4a3cdc" stroke-width="5" opacity="0.62"/>
<path d="M513.8,745.3L508.7,745.7 503.5,746.1 498.3,746.3 493.2,746.3 488,746.3 482.8,746.1 477.7,745.7 472.6,745.3 467.5,744.7 462.4,744 457.4,743.1 452.3,742.1 447.4,741 442.4,739.8 437.5,738.4 432.7,736.9 427.9,735.3 423.1,733.5 418.4,731.7 413.8,729.7 409.2,727.6 404.7,725.3 400.3,723 395.9,720.5 391.6,717.9 387.4,715.2 383.3,712.4 379.2,709.5 375.3,706.5 371.4,703.4 367.6,700.1 363.9,696.8 360.3,693.4 356.8,689.9 353.4,686.3 350.1,682.5 346.9,678.7 343.9,674.9 340.9,670.9 338,666.9 335.3,662.7 332.7,658.5 330.2,654.3 327.8,649.9 325.5,645.5 323.4,641.1 321.3,636.5 319.5,631.9 383.7,731.8 385.6,736.3 387.6,740.9 389.7,745.3 392,749.7 394.4,754.1 396.9,758.4 399.5,762.6 402.3,766.7 405.1,770.7 408.1,774.7 411.2,778.6 414.4,782.4 417.7,786.1 421.1,789.7 424.6,793.2 428.2,796.6 431.8,800 435.6,803.2 439.5,806.3 443.5,809.3 447.5,812.3 451.7,815.1 455.9,817.8 460.2,820.3 464.5,822.8 469,825.1 473.5,827.4 478,829.5 482.7,831.5 487.4,833.4 492.1,835.1 496.9,836.7 501.8,838.2 506.7,839.6 511.6,840.8 516.6,841.9 521.6,842.9 526.6,843.8 531.7,844.5 536.8,845.1 541.9,845.6 547.1,845.9 552.2,846.1 557.4,846.2 562.6,846.1 567.7,845.9 572.9,845.6 578.1,845.1Z" stroke="#4a3cdc" stroke-width="5" opacity="0.62"/>
</g>
<g fill="none" clip-path="url(#pk)">
<path d="M342,464.4L342,464.3 341.9,464.1 341.9,464 341.9,463.8 341.9,463.5 342,463.3 342,463.1 342.1,462.8 342.2,462.5 342.3,462.2 342.4,461.9 342.6,461.6 342.7,461.3 342.9,461 343.1,460.7 343.3,460.5 347.3,454.6 351.5,448.9 356,443.3 360.6,437.9 365.4,432.6 370.4,427.5 375.5,422.6 380.9,417.8 386.4,413.2 392,408.8 397.8,404.6 403.7,400.6 409.8,396.7 416,393.1 422.3,389.7 428.7,386.5 435.2,383.6 441.8,380.8 448.5,378.3 455.3,376 462.1,373.9 469,372.1 475.9,370.5 482.9,369.2 489.9,368.1 496.9,367.2 503.9,366.6 511,366.2 511.3,366.2 511.7,366.2 512,366.2 512.4,366.2 512.7,366.3 513,366.3 513.3,366.3 513.6,366.4 513.9,366.5 514.1,366.5 514.4,366.6 514.6,366.7 514.7,366.8 514.9,366.9 515,367 515.1,367.1 571.7,455.1 571.7,455.2 571.7,455.3 571.7,455.4 571.7,455.4 571.6,455.5 571.5,455.6 571.3,455.7 571.1,455.8 570.9,455.9 570.7,455.9 570.4,456 570.2,456 569.9,456.1 569.5,456.1 569.2,456.1 568.9,456.2 561.8,456.5 554.8,457.2 547.8,458 540.8,459.1 533.8,460.5 526.9,462.1 520,463.9 513.2,466 506.4,468.3 499.7,470.8 493.1,473.5 486.6,476.5 480.2,479.7 473.9,483.1 467.7,486.7 461.6,490.5 455.7,494.6 449.9,498.8 444.3,503.2 438.8,507.8 433.4,512.6 428.3,517.5 423.3,522.6 418.5,527.9 413.9,533.3 409.4,538.9 405.2,544.6 401.2,550.4 401,550.7 400.8,551 400.6,551.2 400.4,551.5 400.2,551.7 400,551.9 399.8,552 399.6,552.2 399.5,552.3 399.3,552.4 399.2,552.5 399,552.5 398.9,552.5 398.8,552.5 398.7,552.4 398.6,552.3 342,464.4" stroke="#5d9bd6" stroke-width="1"/>
<path d="M380.7,438.9L380.7,438.8 380.7,438.7 380.7,438.5 380.7,438.3 380.7,438.1 380.8,437.9 380.9,437.7 381,437.5 381.2,437.2 381.3,437 381.5,436.7 381.7,436.5 381.9,436.2 382.1,436 382.4,435.7 382.6,435.5 388,430.7 393.5,426 399.1,421.6 404.9,417.3 410.9,413.2 416.9,409.4 423.1,405.7 429.5,402.3 435.9,399 442.4,396 449.1,393.2 455.8,390.7 462.6,388.4 469.4,386.3 476.3,384.4 476.7,384.3 477,384.3 477.3,384.2 477.7,384.2 478,384.2 478.3,384.1 478.6,384.1 478.9,384.1 479.2,384.2 479.4,384.2 479.7,384.2 479.9,384.3 480,384.4 480.2,384.4 480.3,384.5 480.4,384.6 521.5,448.6 521.6,448.7 521.6,448.8 521.6,448.9 521.5,449.1 521.5,449.2 521.3,449.3 521.2,449.4 521,449.6 520.8,449.7 520.6,449.8 520.3,449.9 520.1,450 519.8,450.1 519.5,450.3 519.1,450.3 518.8,450.4 511.9,452.3 505,454.4 498.2,456.7 491.5,459.3 484.9,462 478.4,465.1 471.9,468.3 465.6,471.7 459.4,475.4 453.3,479.2 447.4,483.3 441.6,487.6 435.9,492 430.4,496.7 425.1,501.5 424.9,501.7 424.6,501.9 424.3,502.2 424.1,502.3 423.8,502.5 423.6,502.7 423.3,502.8 423.1,502.9 422.9,503 422.7,503.1 422.5,503.1 422.4,503.1 422.2,503.1 422.1,503.1 422,503 421.9,502.9 380.7,438.9" stroke="#5d9bd6" stroke-width="1"/>
<path d="M420.3,427L420.2,426.9 420.2,426.8 420.2,426.6 420.3,426.5 420.3,426.3 420.4,426.1 420.5,425.9 420.7,425.7 420.9,425.5 421.1,425.3 421.3,425.1 421.5,424.9 421.8,424.7 422,424.5 422.3,424.3 422.6,424.1 430,419.6 437.6,415.5 445.3,411.6 445.6,411.4 445.9,411.3 446.2,411.2 446.6,411.1 446.9,411 447.2,410.9 447.5,410.9 447.7,410.8 448,410.8 448.2,410.8 448.4,410.8 448.6,410.8 448.8,410.9 448.9,411 449,411 449.1,411.1 473.3,448.6 473.3,448.7 473.3,448.9 473.3,449 473.3,449.1 473.2,449.3 473.1,449.4 472.9,449.6 472.8,449.8 472.6,449.9 472.4,450.1 472.1,450.3 471.9,450.5 471.6,450.6 471.3,450.8 471,451 470.7,451.1 463,455 455.4,459.2 448,463.6 447.7,463.8 447.4,464 447.1,464.1 446.8,464.3 446.5,464.4 446.3,464.5 446,464.6 445.7,464.7 445.5,464.7 445.3,464.8 445.1,464.8 444.9,464.8 444.7,464.7 444.6,464.7 444.5,464.6 444.4,464.5 420.3,427" stroke="#5d9bd6" stroke-width="1"/>
<path d="M431.6,416.6L430.3,417.1 428.5,417.7 426.4,418.5 424.1,419.3 421.9,420.2 420,421 418.3,421.8 416.7,422.6 415.2,423.4 413.7,424.3 412.2,425.1 410.6,425.9 408.9,426.7 407.1,427.5 405.2,428.2 403.4,429 401.6,429.7 400,430.5 398.5,431.2 397,431.9 395.7,432.6 394.3,433.4 393.1,434.2 391.9,435.2 390.8,436.3 389.7,437.5 388.7,438.9 387.7,440.2 386.8,441.6 386,443 385.3,444.4 384.7,445.7 384.3,447.1 383.8,448.6 383.2,450.1 382.6,451.6 381.8,453.2 381,454.9 380.1,456.7 379.2,458.5 378.3,460.2 377.5,462 376.7,463.8 376,465.6 375.3,467.4 374.6,469.2 373.9,470.9 373.3,472.5 372.7,473.9 372.2,475.2 371.7,476.5 371.2,477.6 370.8,478.8 370.5,480 370.2,481.2 370,482.3 369.9,483.5 369.8,484.6 369.7,485.8 369.6,487 369.5,488.3 369.4,489.8 369.4,491.3 369.4,492.7 369.3,493.9 369.3,494.7" stroke="#6fe070" stroke-width="1.1"/>
<path d="M328.5,475.5L331,471 333.5,466.4 336.2,462 338.9,457.6 341.8,453.2 344.8,449 347.9,444.8 351.2,440.6 354.5,436.6 357.9,432.6 361.5,428.8 365.1,425 368.8,421.3 372.6,417.6 376.5,414.1 380.5,410.7 384.6,407.4 388.8,404.1 393,401 397.3,398 401.7,395.1 406.2,392.3 410.7,389.6 415.3,387 419.9,384.6 424.6,382.2 429.4,380 434.2,377.9 439.1,375.9 444,374 448.9,372.3 453.9,370.6 459,369.2 464,367.8 469.1,366.5 474.2,365.4 479.3,364.5 484.5,363.6 489.6,362.9 494.8,362.3 500,361.8 505.1,361.5 510.3,361.3 515.5,361.3 520.7,361.3 525.8,361.5 530.9,361.9 536.1,362.3 600.3,462.1 595.2,461.7 590,461.3 584.9,461.1 579.7,461.1 574.6,461.1 569.4,461.3 564.2,461.7 559,462.1 553.9,462.7 548.7,463.4 543.6,464.3 538.4,465.3 533.3,466.4 528.2,467.6 523.2,469 518.2,470.5 513.2,472.1 508.2,473.8 503.3,475.7 498.5,477.7 493.6,479.8 488.9,482 484.2,484.4 479.5,486.8 474.9,489.4 470.4,492.1 465.9,494.9 461.5,497.8 457.2,500.8 453,504 448.8,507.2 444.8,510.5 440.8,513.9 436.9,517.5 433,521.1 429.3,524.8 425.7,528.6 422.2,532.4 418.7,536.4 415.4,540.5 412.2,544.6 409.1,548.8 406.1,553 403.2,557.4 400.4,561.8 397.7,566.2 395.2,570.8 392.8,575.4Z" stroke="#1010ff" stroke-width="3.6" stroke-linejoin="round"/>
<path d="M328.5,475.5L331,471 333.5,466.4 336.2,462 338.9,457.6 341.8,453.2 344.8,449 347.9,444.8 351.2,440.6 354.5,436.6 357.9,432.6 361.5,428.8 365.1,425 368.8,421.3 372.6,417.6 376.5,414.1 380.5,410.7 384.6,407.4 388.8,404.1 393,401 397.3,398 401.7,395.1 406.2,392.3 410.7,389.6 415.3,387 419.9,384.6 424.6,382.2 429.4,380 434.2,377.9 439.1,375.9 444,374 448.9,372.3 453.9,370.6 459,369.2 464,367.8 469.1,366.5 474.2,365.4 479.3,364.5 484.5,363.6 489.6,362.9 494.8,362.3 500,361.8 505.1,361.5 510.3,361.3 515.5,361.3 520.7,361.3 525.8,361.5 530.9,361.9 536.1,362.3" stroke="#0808ff" stroke-width="5" stroke-linecap="round"/>
</g>
<g fill="none" stroke-linecap="butt">
<path d="M598.75,700L611,719.5" stroke="#ff1010" stroke-width="3.2"/>
<circle cx="611.3" cy="720" r="4" fill="#ff1010"/>
<path d="M598.75,700L657,669.3" stroke="#12f012" stroke-width="3.2"/>
<path d="M667.5,659.8L658.5,671.5L654.5,664Z" fill="#12d812"/>
<path d="M598.75,700L566,645" stroke="#0a0ae6" stroke-width="3.2"/>
<path d="M559.4,633.75L569.2,643.8L562.5,647.8Z" fill="#0a0ae6"/>
</g>
<text x="540.5" y="620.5" font-family="Liberation Sans,sans-serif" font-size="17.5" fill="#2a14d8">Z</text>
<text x="683" y="652" font-family="Liberation Sans,sans-serif" font-size="17.5" fill="#38e030" transform="rotate(-12 689 646)">Y</text>
<text x="612.5" y="737.5" font-family="Liberation Sans,sans-serif" font-size="17.5" fill="#ff1a0a" transform="rotate(-8 618 733)">X</text>
</svg>
<div id="panel">
<div class="box"></div>
<div class="abs" style="left:1068px;top:41px;width:372px;height:1px;background:#bdbdbd"></div>
<div class="abs" style="left:1068px;top:42px;width:372px;height:1px;background:#dedede"></div>
<svg class="abs" style="left:1075px;top:16px" width="16" height="16" viewBox="0 0 16 16"><circle cx="8" cy="8" r="7" fill="#1a1a1a"/><rect x="3.6" y="6.9" width="8.8" height="2.3" fill="#e8e8e8"/></svg>
<div class="t title" style="left:1104.5px;top:15.3px">2D POCKET : 2D POCKET1</div>
<div class="abs" style="left:1068px;top:83px;width:372px;height:2px;background:#c3c3c3"></div>
<div class="abs tab" style="left:1069px;top:46px;width:40px;height:37px"></div>
<div class="abs tab" style="left:1153px;top:46px;width:43px;height:37px"></div>
<div class="abs tab" style="left:1196px;top:46px;width:43.5px;height:37px"></div>
<div class="abs tab" style="left:1239.5px;top:46px;width:44px;height:37px"></div>
<div class="abs tabA" style="left:1108.5px;top:45.5px;width:45px;height:40px"></div>
<svg class="abs" style="left:1068px;top:42px" width="374" height="44" viewBox="0 0 374 44">
   <g transform="translate(13.6,14) scale(1.02,0.93)">
    <path d="M1.5,1 Q1.5,0 3,0 L14,0 Q15.5,0 15.5,1 L15.5,8 Q15.5,9.5 13.5,10 L13,24 Q9,27 5,24 L4,10 Q1.5,9.5 1.5,8 Z" fill="#e6e6e6" stroke="#6a6a6a" stroke-width="1.2"/>
    <path d="M5,11 L12.5,11 L12.5,15 L6,23 L5,22 Z" fill="#3a3a3a"/>
    <path d="M8,23.5 L12.6,17.5 L12.8,23.5 Q10.5,25.5 8,23.5Z" fill="#2a2a2a"/>
   </g>
   <g transform="translate(52,12.2) scale(0.8,0.96)">
    <path d="M9,6 L14,1 L27,1 L27,15 L22,20 L22,9 L9,9 Z" fill="#7fb2e3" stroke="#2f4a75" stroke-width="1.2" stroke-linejoin="round"/>
    <path d="M14,1 L27,1 L22,6 L9,6 Z" fill="#a9d0f2" stroke="#2f4a75" stroke-width="1"/>
    <path d="M1,14 L6,9 L19,9 L19,18 L14,24 L1,24 Z" fill="#eef1f5" stroke="#2b3a52" stroke-width="1.2" stroke-linejoin="round"/>
    <path d="M1,14 L14,14 L14,24 M14,14 L19,9" fill="none" stroke="#2b3a52" stroke-width="1"/>
    <path d="M14.5,14.5 L18.5,10 L18.5,18 L14.5,23 Z" fill="#aab6c8"/>
   </g>
   <g transform="translate(95,10.5) scale(0.9,1)">
    <path d="M3,9 L9,2 L26,2 L20,9 Z" fill="#f5a21d" stroke="#e08a0a" stroke-width="1"/>
    <path d="M1,14 L6,10 L24,10 L24,18 L19,24 L1,24 Z" fill="#eef1f5" stroke="#2b3a52" stroke-width="1.2" stroke-linejoin="round"/>
    <path d="M1,14 L19,14 L19,24 M19,14 L24,10" fill="none" stroke="#2b3a52" stroke-width="1"/>
    <path d="M19.5,14.5 L23.5,11 L23.5,18 L19.5,23 Z" fill="#aab6c8"/>
   </g>
   <g transform="translate(139,11)">
    <path d="M1,1 L5,1 L5,19 L20,19 L20,1 L24,1 L24,23 L1,23 Z" fill="#dfe6f0" stroke="#26365a" stroke-width="1.4"/>
    <rect x="6" y="5" width="13" height="3.4" fill="#4f86d0"/>
    <rect x="6" y="8.4" width="13" height="2.6" fill="#b9d2f0"/>
    <rect x="6" y="12" width="13" height="3.4" fill="#4f86d0"/>
    <rect x="6" y="15.4" width="13" height="2.6" fill="#b9d2f0"/>
   </g>
   <g transform="translate(182,10)">
    <path d="M2,13 L2,2 L22,2 L22,13" fill="none" stroke="#eeee1c" stroke-width="3.4"/>
    <path d="M5,13 L5,5.5 L19,5.5 L19,13" fill="none" stroke="#d9c9a0" stroke-width="1.2"/>
    <rect x="0.5" y="11.6" width="23" height="2.6" fill="#4fa64f"/>
    <path d="M10,8.5 L14,8.5 L14,17 L22.5,17 L22.5,23 L1.5,23 L1.5,17 L10,17 Z" fill="#e4e8ee" stroke="#1f2a3a" stroke-width="1.5"/>
   </g>
  </svg>
<div class="abs tri" style="left:1082px;top:105px"></div>
<div class="t hd" style="left:1105px;top:99.7px">Geometry</div>
<div class="t" style="left:1087px;top:144.7px">Contour Mode</div>
<div class="abs dd" style="left:1237.5px;top:135px;width:155px;height:39px"><span class="t" style="left:10.2px;top:9.3px;width:124px;overflow:hidden;letter-spacing:-0.17px">Selected pocke...</span><i class="caret"></i></div>
<div class="t" style="left:1087px;top:189.9px">Pocket Selections</div>
<div class="abs sel" style="left:1237px;top:179.2px;width:106.8px;height:40.4px"><svg class="abs" style="left:10.4px;top:6.6px" width="17.4" height="24" viewBox="0 0 16 22"><path d="M2,1 L2,17 L6,13.5 L9,20.5 L11.8,19.3 L8.8,12.6 L14,12.2 Z" fill="#e9edf2" stroke="#3d5a78" stroke-width="1.1" stroke-linejoin="round"/></svg><span class="t" style="left:32.5px;top:10.9px;color:#fff">3 Chains</span></div>
<svg class="abs" style="left:1360px;top:193.5px" width="14" height="13" viewBox="0 0 14 13"><path d="M1.6,1.2 L12.2,11.8 M12.2,1.2 L1.6,11.8" stroke="#4a4a4a" stroke-width="2.7" fill="none"/></svg>
<div class="t" style="left:1087px;top:234.7px">Extension Method</div>
<div class="abs dd" style="left:1237.5px;top:224.5px;width:155px;height:39.3px"><span class="t" style="left:10.2px;top:10.2px">Tangent</span><i class="caret" style="top:17.2px"></i></div>
<div class="abs" style="left:1070px;top:273.7px;width:351px;height:4.4px;background:#c2c2c2"></div>
<div class="abs" style="left:1070px;top:333.7px;width:351px;height:4.4px;background:#c2c2c2"></div>
<div class="abs" style="left:1070px;top:393.7px;width:351px;height:4.4px;background:#c2c2c2"></div>
<div class="abs cb" style="left:1084.2px;top:294.8px"></div>
<div class="t hd" style="left:1115px;top:295.1px">Stock Contours</div>
<div class="abs cb" style="left:1084.2px;top:354.6px"></div>
<div class="t hd" style="left:1114.2px;top:355.1px">Rest Machining</div>
<div class="abs tri" style="left:1082.4px;top:420px"></div>
<div class="abs cb" style="left:1107.4px;top:414.8px"><svg width="19" height="19" viewBox="0 0 19 19" style="position:absolute;left:-1px;top:-1px"><path d="M4.2,9.6 L7.6,14.6 L15,3.6" fill="none" stroke="#111" stroke-width="2" stroke-linecap="round" stroke-linejoin="round"/></svg></div>
<div class="t hd" style="left:1136.2px;top:415.1px">Wrap Toolpath</div>
<div class="t" style="left:1087px;top:460.1px">Wrap Cylinder</div>
<div class="abs dd" style="left:1237.5px;top:449.5px;width:77px;height:39.3px"><svg class="abs" style="left:10px;top:6.5px" width="16" height="22" viewBox="0 0 16 22"><path d="M2,1 L2,17 L6,13.5 L9,20.5 L11.8,19.3 L8.8,12.6 L14,12.2 Z" fill="#f4f4f6" stroke="#5a5a66" stroke-width="1.1" stroke-linejoin="round"/></svg><span class="t" style="left:31px;top:9.7px">Face</span></div>
<svg class="abs" style="left:1331.8px;top:463.5px" width="14" height="13" viewBox="0 0 14 13"><path d="M1.6,1.2 L12.2,11.8 M12.2,1.2 L1.6,11.8" stroke="#4a4a4a" stroke-width="2.7" fill="none"/></svg>
<div class="t" style="left:1087px;top:505.1px">Offset</div>
<div class="abs dd" style="left:1238.2px;top:495px;width:154.3px;height:38.5px;border-color:#cdcdcd"><span class="t" style="left:3.6px;top:9.6px">0 mm</span><div class="spin"><i class="up"></i><i class="dn"></i></div></div>
<div class="t" style="left:1087px;top:550.3px">Radius</div>
<div class="t" style="left:1242.6px;top:550.3px">24.4944 mm</div>
<div class="abs" style="left:1068px;top:584px;width:372px;height:1px;background:#c8c8c8"></div>
<svg class="abs" style="left:1080px;top:602px" width="20" height="20" viewBox="0 0 20 20"><circle cx="10" cy="10" r="9.2" fill="#0b0b0b"/><rect x="8.6" y="8.3" width="3" height="6.6" fill="#f4f4f4"/><rect x="7.4" y="8.3" width="3" height="1.6" fill="#f4f4f4"/><rect x="7.2" y="13.6" width="5.8" height="1.6" fill="#f4f4f4"/><circle cx="10" cy="5.4" r="1.7" fill="#f4f4f4"/></svg>
<div class="abs btn" style="left:1229.4px;top:597.6px;width:89.4px;height:27px"><span class="t" style="left:0;width:100%;top:4.0px;text-align:center;color:#5a5a5a">OK</span></div>
<div class="abs btn" style="left:1334px;top:597.6px;width:90px;height:27px"><span class="t" style="left:0;width:100%;top:4.0px;text-align:center;color:#5a5a5a">Cancel</span></div>
</div>
<svg id="overlay" width="1503" height="1072" viewBox="0 0 1503 1072"><path d="M869,132.9L876.6,127.6 1060,374.7 1036,392.5Z" fill="#e6392d"/>
<circle cx="872.8" cy="130.2" r="4.6" fill="#e6392d"/>
<path d="M1075.3,360.6L1068.8,413.4 1018.1,399.8Z" fill="#e6392d" stroke="#e6392d" stroke-width="6.4" stroke-linejoin="round"/>
</svg>
</body></html>
